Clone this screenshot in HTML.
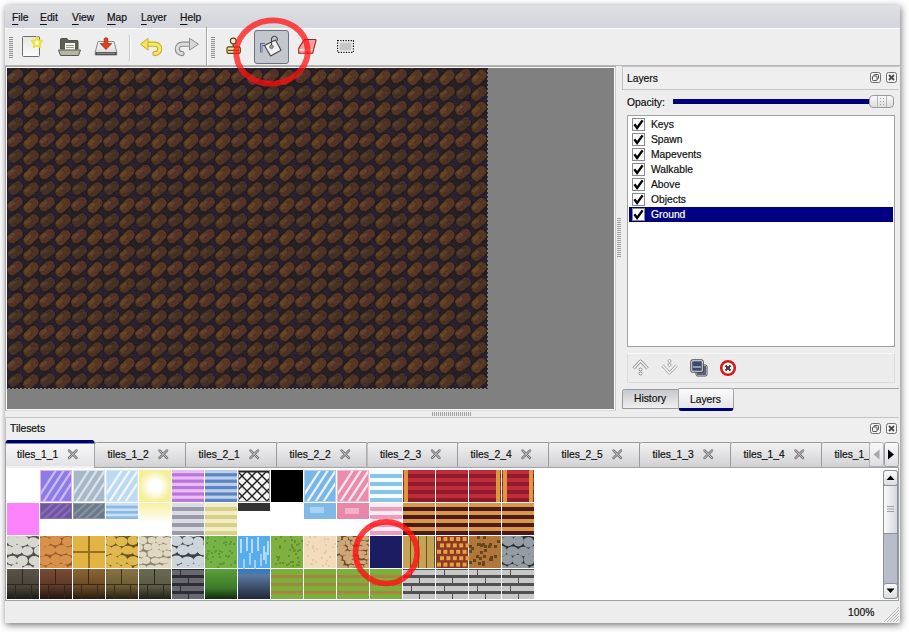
<!DOCTYPE html>
<html><head><meta charset="utf-8">
<style>
*{margin:0;padding:0;box-sizing:border-box}
html,body{width:909px;height:632px;overflow:hidden;background:#fff}
body{position:relative;font-family:"Liberation Sans",sans-serif;font-size:10px;color:#1a1a1a}
.a{position:absolute}
.t{position:absolute;font-size:10.3px;line-height:12px;white-space:nowrap;-webkit-text-stroke:0.2px currentColor;color:#111}
.u{text-decoration:underline;text-underline-offset:3px}
#win{left:5px;top:5px;width:895px;height:618px;background:#ededed;box-shadow:1px 2px 7px rgba(0,0,0,.55)}
#menubar{left:5px;top:5px;width:895px;height:23px;background:linear-gradient(#dfe0e4,#d4d5da)}
#toolbar{left:5px;top:28px;width:895px;height:38px;background:#eeeeee;border-top:1px solid #fafafa;border-bottom:1px solid #b6b6b6}
</style></head><body>
<div id="win" class="a"></div>
<div id="menubar" class="a"></div>
<div class="t" style="left:12px;top:12px"><span class="u">F</span>ile</div>
<div class="t" style="left:40px;top:12px"><span class="u">E</span>dit</div>
<div class="t" style="left:72px;top:12px"><span class="u">V</span>iew</div>
<div class="t" style="left:107px;top:12px"><span class="u">M</span>ap</div>
<div class="t" style="left:141px;top:12px"><span class="u">L</span>ayer</div>
<div class="t" style="left:180px;top:12px"><span class="u">H</span>elp</div>
<div id="toolbar" class="a"></div>
<svg class="a" style="left:0;top:0" width="909" height="70" viewBox="0 0 909 70">
<defs>
<linearGradient id="pg" x1="0" y1="0" x2="0" y2="1"><stop offset="0" stop-color="#e6e6e2"/><stop offset="1" stop-color="#fbfbfb"/></linearGradient>
<linearGradient id="trayg" x1="0" y1="0" x2="0" y2="1"><stop offset="0" stop-color="#f8f8f8"/><stop offset="1" stop-color="#d8d8d8"/></linearGradient>
</defs>
<!-- grips -->
<g fill="#8e8e8e"><rect x="9" y="37" width="4" height="1"/><rect x="9" y="39" width="4" height="1"/><rect x="9" y="41" width="4" height="1"/><rect x="9" y="43" width="4" height="1"/><rect x="9" y="45" width="4" height="1"/><rect x="9" y="47" width="4" height="1"/><rect x="9" y="49" width="4" height="1"/><rect x="9" y="51" width="4" height="1"/><rect x="9" y="53" width="4" height="1"/><rect x="9" y="55" width="4" height="1"/><rect x="9" y="57" width="4" height="1"/></g>
<g fill="#8e8e8e"><rect x="211" y="37" width="4" height="1"/><rect x="211" y="39" width="4" height="1"/><rect x="211" y="41" width="4" height="1"/><rect x="211" y="43" width="4" height="1"/><rect x="211" y="45" width="4" height="1"/><rect x="211" y="47" width="4" height="1"/><rect x="211" y="49" width="4" height="1"/><rect x="211" y="51" width="4" height="1"/><rect x="211" y="53" width="4" height="1"/><rect x="211" y="55" width="4" height="1"/><rect x="211" y="57" width="4" height="1"/></g>
<rect x="129" y="35" width="1" height="26" fill="#c9c9c9"/><rect x="130" y="35" width="1" height="26" fill="#fbfbfb"/>
<rect x="206" y="27" width="1" height="38" fill="#a9a9a9"/><rect x="207" y="28" width="1" height="37" fill="#fafafa"/>
<!-- new -->
<rect x="22.5" y="36.5" width="17" height="20" rx="1" fill="url(#pg)" stroke="#6c6c6c"/>
<polygon points="37.00,37.00 38.76,40.17 42.33,40.87 39.85,43.53 40.29,47.13 37.00,45.60 33.71,47.13 34.15,43.53 31.67,40.87 35.24,40.17" fill="#f6ee6a" stroke="#ece23a" stroke-width="2" stroke-linejoin="round" opacity=".95"/><circle cx="37" cy="42.8" r="1.9" fill="#fffef0"/>
<!-- open -->
<path d="M60.5 49 V39.5 Q60.5 38.5 61.5 38.5 H67 L68.5 40.5 H77 Q78 40.5 78 41.5 V49 Z" fill="#5e5e52" stroke="#505046"/>
<rect x="65" y="43" width="10" height="7" fill="#f4f4f0"/>
<rect x="66" y="45" width="8" height="1" fill="#9a9a90"/><rect x="66" y="47" width="8" height="1" fill="#9a9a90"/>
<path d="M58.5 50 H80.5 L78.5 55.5 H60.5 Z" fill="#b6b6a6" stroke="#56564c"/>
<!-- save -->
<path d="M98 41.5 H114 L116.8 52.5 V55 H95.2 V52.5 Z" fill="url(#trayg)" stroke="#8a8a8a"/>
<rect x="95.5" y="52" width="21" height="3" fill="#4c4c4c"/>
<rect x="97" y="52.8" width="18" height="1" fill="#9a9a9a"/>
<path d="M104.2 38.5 Q106 36.8 107.8 38.5 V43.5 H111.8 L106 49.5 L100.2 43.5 H104.2 Z" fill="#e2401c" stroke="#b02a10" stroke-width=".8"/>
<!-- undo -->
<path d="M147.5 44.2 H155 A4.7 4.7 0 0 1 155 53.6" fill="none" stroke="#c4ae2a" stroke-width="5.2" stroke-linecap="round"/>
<path d="M147.5 44.2 H155 A4.7 4.7 0 0 1 155 53.6" fill="none" stroke="#f6ea64" stroke-width="3" stroke-linecap="round"/>
<polygon points="140.5,44.2 148,38.3 148,50.1" fill="#f4e45a" stroke="#c4ae2a" stroke-width="1" stroke-linejoin="round"/>
<!-- redo -->
<path d="M190 44.2 H182 A4.7 4.7 0 0 0 182 53.6" fill="none" stroke="#8c8c8c" stroke-width="5.2" stroke-linecap="round"/>
<path d="M190 44.2 H182 A4.7 4.7 0 0 0 182 53.6" fill="none" stroke="#dcdcdc" stroke-width="3" stroke-linecap="round"/>
<polygon points="198.5,44.2 189.5,38.3 189.5,50.1" fill="#d8d8d8" stroke="#8c8c8c" stroke-width="1" stroke-linejoin="round"/>
<!-- stamp -->
<circle cx="233.3" cy="41" r="2.9" fill="#f4ead0" stroke="#5a4218" stroke-width="1.2"/>
<rect x="232.6" y="44" width="1.6" height="2.8" fill="#6a4a1a"/>
<rect x="227" y="46.9" width="13.3" height="6.5" rx="1.6" fill="#f0e2a4" stroke="#5a4218" stroke-width="1.2"/>
<rect x="228" y="49.8" width="11.3" height="1.3" fill="#6a5020"/>
<!-- bucket button -->
<rect x="254.5" y="30.5" width="34" height="33" rx="2.5" fill="#c2c6cd" stroke="#6c727e"/>
<path d="M261.2 52.5 V44.5 H265" fill="none" stroke="#46507c" stroke-width="2.4"/>
<path d="M261.2 52.5 V44.5 H265" fill="none" stroke="#b8c4ec" stroke-width="1"/>
<polygon points="264.5,45.5 275.5,40 281,50.3 270.6,56" fill="#f2f2f2" stroke="#454545" stroke-width="1.1" stroke-linejoin="round"/>
<path d="M271.5 46.5 V40 A3 3 0 1 1 277 40.8" fill="none" stroke="#454545" stroke-width="1.1"/>
<circle cx="271.5" cy="46.8" r="1.8" fill="#9a9a9a" stroke="#555" stroke-width=".8"/>
<!-- eraser -->
<path d="M304.3 39.5 H315.3 Q316.3 39.5 316 40.6 L312.6 53.3 H298.7 V48.4 Z" fill="#f3a0a0" stroke="#9c2424" stroke-width="1.1" stroke-linejoin="round"/>
<rect x="299.5" y="49" width="13" height="1.4" fill="#fde8e8"/>
<!-- rect select -->
<rect x="337" y="40" width="17" height="13" fill="#f8f8f8"/><rect x="339.5" y="42.5" width="12" height="8" fill="#c6c6c4"/><rect x="337.6" y="40.6" width="15.8" height="11.8" fill="none" stroke="#0a0a0a" stroke-width="1.2" stroke-dasharray="1.3 1.3"/>
</svg>


<!-- map view -->
<div class="a" style="left:5px;top:66px;width:611px;height:345px;border:1px solid #a8a8a8;border-right-color:#c8c8c8;border-bottom-color:#d8d8d8;background:#fafafa"></div>
<div class="a" style="left:7px;top:68px;width:607px;height:341px;background:#808080"></div>
<svg class="a" style="left:7px;top:68px" width="481" height="321" viewBox="0 0 481 321">
<defs><pattern id="mt" width="32" height="32" patternUnits="userSpaceOnUse">
<rect width="32" height="32" fill="#282026"/><g transform="translate(-32 -32)"><ellipse cx="16" cy="16" rx="4" ry="4" fill="#2a2230"/><ellipse cx="0" cy="0" rx="4" ry="4" fill="#2a2230"/><g transform="rotate(-38 8 8)"><rect x="-1.3" y="2.2" width="18.6" height="11.6" rx="5.0" fill="#241a1c"/><rect x="-0.5" y="3.0" width="17" height="10" rx="4.5" fill="#54342c"/><rect x="1.5" y="4.0" width="7.65" height="3.5" rx="1" fill="#64462e"/></g><g transform="rotate(-44 24 9.5)"><rect x="14.7" y="3.7" width="18.6" height="11.6" rx="5.0" fill="#241a1c"/><rect x="15.5" y="4.5" width="17" height="10" rx="4.5" fill="#5a3826"/><rect x="17.5" y="5.5" width="7.65" height="3.5" rx="1" fill="#6a4628"/></g><g transform="rotate(-36 8.5 24)"><rect x="-0.30000000000000004" y="18.2" width="17.6" height="11.6" rx="5.0" fill="#241a1c"/><rect x="0.5" y="19.0" width="16" height="10" rx="4.5" fill="#46302a"/><rect x="2.5" y="20.0" width="7.2" height="3.5" rx="1" fill="#54402c"/></g><g transform="rotate(-40 24 25.5)"><rect x="14.7" y="19.7" width="18.6" height="11.6" rx="5.0" fill="#241a1c"/><rect x="15.5" y="20.5" width="17" height="10" rx="4.5" fill="#4e3428"/><rect x="17.5" y="21.5" width="7.65" height="3.5" rx="1" fill="#5e4428"/></g></g><g transform="translate(-32 0)"><ellipse cx="16" cy="16" rx="4" ry="4" fill="#2a2230"/><ellipse cx="0" cy="0" rx="4" ry="4" fill="#2a2230"/><g transform="rotate(-38 8 8)"><rect x="-1.3" y="2.2" width="18.6" height="11.6" rx="5.0" fill="#241a1c"/><rect x="-0.5" y="3.0" width="17" height="10" rx="4.5" fill="#54342c"/><rect x="1.5" y="4.0" width="7.65" height="3.5" rx="1" fill="#64462e"/></g><g transform="rotate(-44 24 9.5)"><rect x="14.7" y="3.7" width="18.6" height="11.6" rx="5.0" fill="#241a1c"/><rect x="15.5" y="4.5" width="17" height="10" rx="4.5" fill="#5a3826"/><rect x="17.5" y="5.5" width="7.65" height="3.5" rx="1" fill="#6a4628"/></g><g transform="rotate(-36 8.5 24)"><rect x="-0.30000000000000004" y="18.2" width="17.6" height="11.6" rx="5.0" fill="#241a1c"/><rect x="0.5" y="19.0" width="16" height="10" rx="4.5" fill="#46302a"/><rect x="2.5" y="20.0" width="7.2" height="3.5" rx="1" fill="#54402c"/></g><g transform="rotate(-40 24 25.5)"><rect x="14.7" y="19.7" width="18.6" height="11.6" rx="5.0" fill="#241a1c"/><rect x="15.5" y="20.5" width="17" height="10" rx="4.5" fill="#4e3428"/><rect x="17.5" y="21.5" width="7.65" height="3.5" rx="1" fill="#5e4428"/></g></g><g transform="translate(-32 32)"><ellipse cx="16" cy="16" rx="4" ry="4" fill="#2a2230"/><ellipse cx="0" cy="0" rx="4" ry="4" fill="#2a2230"/><g transform="rotate(-38 8 8)"><rect x="-1.3" y="2.2" width="18.6" height="11.6" rx="5.0" fill="#241a1c"/><rect x="-0.5" y="3.0" width="17" height="10" rx="4.5" fill="#54342c"/><rect x="1.5" y="4.0" width="7.65" height="3.5" rx="1" fill="#64462e"/></g><g transform="rotate(-44 24 9.5)"><rect x="14.7" y="3.7" width="18.6" height="11.6" rx="5.0" fill="#241a1c"/><rect x="15.5" y="4.5" width="17" height="10" rx="4.5" fill="#5a3826"/><rect x="17.5" y="5.5" width="7.65" height="3.5" rx="1" fill="#6a4628"/></g><g transform="rotate(-36 8.5 24)"><rect x="-0.30000000000000004" y="18.2" width="17.6" height="11.6" rx="5.0" fill="#241a1c"/><rect x="0.5" y="19.0" width="16" height="10" rx="4.5" fill="#46302a"/><rect x="2.5" y="20.0" width="7.2" height="3.5" rx="1" fill="#54402c"/></g><g transform="rotate(-40 24 25.5)"><rect x="14.7" y="19.7" width="18.6" height="11.6" rx="5.0" fill="#241a1c"/><rect x="15.5" y="20.5" width="17" height="10" rx="4.5" fill="#4e3428"/><rect x="17.5" y="21.5" width="7.65" height="3.5" rx="1" fill="#5e4428"/></g></g><g transform="translate(0 -32)"><ellipse cx="16" cy="16" rx="4" ry="4" fill="#2a2230"/><ellipse cx="0" cy="0" rx="4" ry="4" fill="#2a2230"/><g transform="rotate(-38 8 8)"><rect x="-1.3" y="2.2" width="18.6" height="11.6" rx="5.0" fill="#241a1c"/><rect x="-0.5" y="3.0" width="17" height="10" rx="4.5" fill="#54342c"/><rect x="1.5" y="4.0" width="7.65" height="3.5" rx="1" fill="#64462e"/></g><g transform="rotate(-44 24 9.5)"><rect x="14.7" y="3.7" width="18.6" height="11.6" rx="5.0" fill="#241a1c"/><rect x="15.5" y="4.5" width="17" height="10" rx="4.5" fill="#5a3826"/><rect x="17.5" y="5.5" width="7.65" height="3.5" rx="1" fill="#6a4628"/></g><g transform="rotate(-36 8.5 24)"><rect x="-0.30000000000000004" y="18.2" width="17.6" height="11.6" rx="5.0" fill="#241a1c"/><rect x="0.5" y="19.0" width="16" height="10" rx="4.5" fill="#46302a"/><rect x="2.5" y="20.0" width="7.2" height="3.5" rx="1" fill="#54402c"/></g><g transform="rotate(-40 24 25.5)"><rect x="14.7" y="19.7" width="18.6" height="11.6" rx="5.0" fill="#241a1c"/><rect x="15.5" y="20.5" width="17" height="10" rx="4.5" fill="#4e3428"/><rect x="17.5" y="21.5" width="7.65" height="3.5" rx="1" fill="#5e4428"/></g></g><g transform="translate(0 0)"><ellipse cx="16" cy="16" rx="4" ry="4" fill="#2a2230"/><ellipse cx="0" cy="0" rx="4" ry="4" fill="#2a2230"/><g transform="rotate(-38 8 8)"><rect x="-1.3" y="2.2" width="18.6" height="11.6" rx="5.0" fill="#241a1c"/><rect x="-0.5" y="3.0" width="17" height="10" rx="4.5" fill="#54342c"/><rect x="1.5" y="4.0" width="7.65" height="3.5" rx="1" fill="#64462e"/></g><g transform="rotate(-44 24 9.5)"><rect x="14.7" y="3.7" width="18.6" height="11.6" rx="5.0" fill="#241a1c"/><rect x="15.5" y="4.5" width="17" height="10" rx="4.5" fill="#5a3826"/><rect x="17.5" y="5.5" width="7.65" height="3.5" rx="1" fill="#6a4628"/></g><g transform="rotate(-36 8.5 24)"><rect x="-0.30000000000000004" y="18.2" width="17.6" height="11.6" rx="5.0" fill="#241a1c"/><rect x="0.5" y="19.0" width="16" height="10" rx="4.5" fill="#46302a"/><rect x="2.5" y="20.0" width="7.2" height="3.5" rx="1" fill="#54402c"/></g><g transform="rotate(-40 24 25.5)"><rect x="14.7" y="19.7" width="18.6" height="11.6" rx="5.0" fill="#241a1c"/><rect x="15.5" y="20.5" width="17" height="10" rx="4.5" fill="#4e3428"/><rect x="17.5" y="21.5" width="7.65" height="3.5" rx="1" fill="#5e4428"/></g></g><g transform="translate(0 32)"><ellipse cx="16" cy="16" rx="4" ry="4" fill="#2a2230"/><ellipse cx="0" cy="0" rx="4" ry="4" fill="#2a2230"/><g transform="rotate(-38 8 8)"><rect x="-1.3" y="2.2" width="18.6" height="11.6" rx="5.0" fill="#241a1c"/><rect x="-0.5" y="3.0" width="17" height="10" rx="4.5" fill="#54342c"/><rect x="1.5" y="4.0" width="7.65" height="3.5" rx="1" fill="#64462e"/></g><g transform="rotate(-44 24 9.5)"><rect x="14.7" y="3.7" width="18.6" height="11.6" rx="5.0" fill="#241a1c"/><rect x="15.5" y="4.5" width="17" height="10" rx="4.5" fill="#5a3826"/><rect x="17.5" y="5.5" width="7.65" height="3.5" rx="1" fill="#6a4628"/></g><g transform="rotate(-36 8.5 24)"><rect x="-0.30000000000000004" y="18.2" width="17.6" height="11.6" rx="5.0" fill="#241a1c"/><rect x="0.5" y="19.0" width="16" height="10" rx="4.5" fill="#46302a"/><rect x="2.5" y="20.0" width="7.2" height="3.5" rx="1" fill="#54402c"/></g><g transform="rotate(-40 24 25.5)"><rect x="14.7" y="19.7" width="18.6" height="11.6" rx="5.0" fill="#241a1c"/><rect x="15.5" y="20.5" width="17" height="10" rx="4.5" fill="#4e3428"/><rect x="17.5" y="21.5" width="7.65" height="3.5" rx="1" fill="#5e4428"/></g></g><g transform="translate(32 -32)"><ellipse cx="16" cy="16" rx="4" ry="4" fill="#2a2230"/><ellipse cx="0" cy="0" rx="4" ry="4" fill="#2a2230"/><g transform="rotate(-38 8 8)"><rect x="-1.3" y="2.2" width="18.6" height="11.6" rx="5.0" fill="#241a1c"/><rect x="-0.5" y="3.0" width="17" height="10" rx="4.5" fill="#54342c"/><rect x="1.5" y="4.0" width="7.65" height="3.5" rx="1" fill="#64462e"/></g><g transform="rotate(-44 24 9.5)"><rect x="14.7" y="3.7" width="18.6" height="11.6" rx="5.0" fill="#241a1c"/><rect x="15.5" y="4.5" width="17" height="10" rx="4.5" fill="#5a3826"/><rect x="17.5" y="5.5" width="7.65" height="3.5" rx="1" fill="#6a4628"/></g><g transform="rotate(-36 8.5 24)"><rect x="-0.30000000000000004" y="18.2" width="17.6" height="11.6" rx="5.0" fill="#241a1c"/><rect x="0.5" y="19.0" width="16" height="10" rx="4.5" fill="#46302a"/><rect x="2.5" y="20.0" width="7.2" height="3.5" rx="1" fill="#54402c"/></g><g transform="rotate(-40 24 25.5)"><rect x="14.7" y="19.7" width="18.6" height="11.6" rx="5.0" fill="#241a1c"/><rect x="15.5" y="20.5" width="17" height="10" rx="4.5" fill="#4e3428"/><rect x="17.5" y="21.5" width="7.65" height="3.5" rx="1" fill="#5e4428"/></g></g><g transform="translate(32 0)"><ellipse cx="16" cy="16" rx="4" ry="4" fill="#2a2230"/><ellipse cx="0" cy="0" rx="4" ry="4" fill="#2a2230"/><g transform="rotate(-38 8 8)"><rect x="-1.3" y="2.2" width="18.6" height="11.6" rx="5.0" fill="#241a1c"/><rect x="-0.5" y="3.0" width="17" height="10" rx="4.5" fill="#54342c"/><rect x="1.5" y="4.0" width="7.65" height="3.5" rx="1" fill="#64462e"/></g><g transform="rotate(-44 24 9.5)"><rect x="14.7" y="3.7" width="18.6" height="11.6" rx="5.0" fill="#241a1c"/><rect x="15.5" y="4.5" width="17" height="10" rx="4.5" fill="#5a3826"/><rect x="17.5" y="5.5" width="7.65" height="3.5" rx="1" fill="#6a4628"/></g><g transform="rotate(-36 8.5 24)"><rect x="-0.30000000000000004" y="18.2" width="17.6" height="11.6" rx="5.0" fill="#241a1c"/><rect x="0.5" y="19.0" width="16" height="10" rx="4.5" fill="#46302a"/><rect x="2.5" y="20.0" width="7.2" height="3.5" rx="1" fill="#54402c"/></g><g transform="rotate(-40 24 25.5)"><rect x="14.7" y="19.7" width="18.6" height="11.6" rx="5.0" fill="#241a1c"/><rect x="15.5" y="20.5" width="17" height="10" rx="4.5" fill="#4e3428"/><rect x="17.5" y="21.5" width="7.65" height="3.5" rx="1" fill="#5e4428"/></g></g><g transform="translate(32 32)"><ellipse cx="16" cy="16" rx="4" ry="4" fill="#2a2230"/><ellipse cx="0" cy="0" rx="4" ry="4" fill="#2a2230"/><g transform="rotate(-38 8 8)"><rect x="-1.3" y="2.2" width="18.6" height="11.6" rx="5.0" fill="#241a1c"/><rect x="-0.5" y="3.0" width="17" height="10" rx="4.5" fill="#54342c"/><rect x="1.5" y="4.0" width="7.65" height="3.5" rx="1" fill="#64462e"/></g><g transform="rotate(-44 24 9.5)"><rect x="14.7" y="3.7" width="18.6" height="11.6" rx="5.0" fill="#241a1c"/><rect x="15.5" y="4.5" width="17" height="10" rx="4.5" fill="#5a3826"/><rect x="17.5" y="5.5" width="7.65" height="3.5" rx="1" fill="#6a4628"/></g><g transform="rotate(-36 8.5 24)"><rect x="-0.30000000000000004" y="18.2" width="17.6" height="11.6" rx="5.0" fill="#241a1c"/><rect x="0.5" y="19.0" width="16" height="10" rx="4.5" fill="#46302a"/><rect x="2.5" y="20.0" width="7.2" height="3.5" rx="1" fill="#54402c"/></g><g transform="rotate(-40 24 25.5)"><rect x="14.7" y="19.7" width="18.6" height="11.6" rx="5.0" fill="#241a1c"/><rect x="15.5" y="20.5" width="17" height="10" rx="4.5" fill="#4e3428"/><rect x="17.5" y="21.5" width="7.65" height="3.5" rx="1" fill="#5e4428"/></g></g>
</pattern>
<filter id="mb" x="0" y="0" width="1" height="1"><feGaussianBlur stdDeviation="0.7"/></filter></defs>
<rect x="0" y="0" width="480" height="320" fill="url(#mt)" filter="url(#mb)"/>
<filter id="nz" x="0" y="0" width="1" height="1"><feTurbulence type="fractalNoise" baseFrequency="0.45" numOctaves="2" seed="4"/><feColorMatrix values="0 0 0 0 0  0 0 0 0 0  0 0 0 0 0  0 0 0 -1.4 0.75"/></filter>
<rect x="0" y="0" width="480" height="320" filter="url(#nz)" opacity=".35"/>
<path d="M480.5 0 V320.5 H0" fill="none" stroke="#161010" stroke-width="1" stroke-dasharray="2 2" opacity=".75"/>
</svg>

<!-- layers dock -->
<div class="a" style="left:622px;top:66px;width:277px;height:24px;border:1px solid #c4c4c4;border-right:none;background:#efefef"></div>
<div class="t" style="left:627px;top:73px">Layers</div>
<div class="t" style="left:627px;top:97px">Opacity:</div>
<div class="a" style="left:673px;top:99px;width:200px;height:5px;background:#00007e"></div>
<div class="a" style="left:869px;top:95px;width:25px;height:13px;border:1px solid #9a9a9a;border-radius:4px;background:linear-gradient(#fafafa,#dcdcdc)"></div>
<div class="a" style="left:627px;top:115px;width:268px;height:232px;border:1px solid #a0a0a0;background:#fff"></div>
<div class="a" style="left:629px;top:207px;width:264px;height:15px;background:#000080"></div>
<div class="t" style="left:651px;top:119px">Keys</div>
<div class="t" style="left:651px;top:134px">Spawn</div>
<div class="t" style="left:651px;top:149px">Mapevents</div>
<div class="t" style="left:651px;top:164px">Walkable</div>
<div class="t" style="left:651px;top:179px">Above</div>
<div class="t" style="left:651px;top:194px">Objects</div>
<div class="t" style="left:651px;top:209px;color:#fff">Ground</div>

<div class="a" style="left:627px;top:353px;width:268px;height:30px;border:1px solid #dadada;border-top-color:#f8f8f8;background:#ececec"></div>

<!-- tilesets dock -->
<div class="a" style="left:5px;top:417px;width:894px;height:24px;border:1px solid #c4c4c4;border-right:none;border-bottom:none;background:#efefef"></div>
<div class="t" style="left:10px;top:423px">Tilesets</div>
<div class="a" style="left:5px;top:467px;width:894px;height:134px;border:1px solid #a0a0a0;background:#fff"></div>

<svg class="a" style="left:0;top:0" width="909" height="632" viewBox="0 0 909 632"><defs><clipPath id="tv"><rect x="6" y="468" width="877" height="131"/></clipPath></defs><g clip-path="url(#tv)"><rect x="40" y="470" width="32" height="32" fill="#8c7ce8" /><clipPath id="c40_470"><rect x="40" y="470" width="32" height="32"/></clipPath><g clip-path="url(#c40_470)" stroke="#d8c8ff" stroke-width="2.2" opacity=".85"><line x1="34" y1="504" x2="60" y2="464"/><line x1="42" y1="504" x2="68" y2="464"/><line x1="50" y1="504" x2="76" y2="464"/><line x1="58" y1="504" x2="84" y2="464"/></g><rect x="40.5" y="470.5" width="31" height="31" fill="none" stroke="#e8b0f0"/><rect x="73" y="470" width="32" height="32" fill="#a8b8c6" /><clipPath id="c73_470"><rect x="73" y="470" width="32" height="32"/></clipPath><g clip-path="url(#c73_470)" stroke="#e4ecf4" stroke-width="2.2" opacity=".85"><line x1="67" y1="504" x2="93" y2="464"/><line x1="75" y1="504" x2="101" y2="464"/><line x1="83" y1="504" x2="109" y2="464"/><line x1="91" y1="504" x2="117" y2="464"/></g><rect x="73.5" y="470.5" width="31" height="31" fill="none" stroke="#d8e4ec"/><rect x="106" y="470" width="32" height="32" fill="#bcdaf2" /><clipPath id="c106_470"><rect x="106" y="470" width="32" height="32"/></clipPath><g clip-path="url(#c106_470)" stroke="#ffffff" stroke-width="2.2" opacity=".85"><line x1="100" y1="504" x2="126" y2="464"/><line x1="108" y1="504" x2="134" y2="464"/><line x1="116" y1="504" x2="142" y2="464"/><line x1="124" y1="504" x2="150" y2="464"/></g><rect x="106.5" y="470.5" width="31" height="31" fill="none" stroke="#d0e8f8"/><radialGradient id="yg"><stop offset=".35" stop-color="#ffffff"/><stop offset="1" stop-color="#f6ee98"/></radialGradient><rect x="139" y="470" width="32" height="32" fill="url(#yg)" /><rect x="172" y="470" width="32" height="32" fill="#ecbcf2" /><rect x="172" y="473.2" width="32" height="3.2" fill="#b676da" /><rect x="172" y="479.6" width="32" height="3.2" fill="#b676da" /><rect x="172" y="486.0" width="32" height="3.2" fill="#b676da" /><rect x="172" y="492.4" width="32" height="3.2" fill="#b676da" /><rect x="172" y="498.8" width="32" height="3.2" fill="#b676da" /><rect x="205" y="470" width="32" height="32" fill="#bcd0ec" /><rect x="205" y="473.2" width="32" height="3.2" fill="#5c84c2" /><rect x="205" y="479.6" width="32" height="3.2" fill="#5c84c2" /><rect x="205" y="486.0" width="32" height="3.2" fill="#5c84c2" /><rect x="205" y="492.4" width="32" height="3.2" fill="#5c84c2" /><rect x="205" y="498.8" width="32" height="3.2" fill="#5c84c2" /><rect x="238" y="470" width="32" height="32" fill="#f4f4f4" /><clipPath id="lat"><rect x="238" y="470" width="32" height="32"/></clipPath><g clip-path="url(#lat)" stroke="#202020" stroke-width="1.3"><line x1="206" y1="470" x2="238" y2="502"/><line x1="206" y1="502" x2="238" y2="470"/><line x1="216" y1="470" x2="248" y2="502"/><line x1="216" y1="502" x2="248" y2="470"/><line x1="226" y1="470" x2="258" y2="502"/><line x1="226" y1="502" x2="258" y2="470"/><line x1="236" y1="470" x2="268" y2="502"/><line x1="236" y1="502" x2="268" y2="470"/><line x1="246" y1="470" x2="278" y2="502"/><line x1="246" y1="502" x2="278" y2="470"/><line x1="256" y1="470" x2="288" y2="502"/><line x1="256" y1="502" x2="288" y2="470"/><line x1="266" y1="470" x2="298" y2="502"/><line x1="266" y1="502" x2="298" y2="470"/><line x1="276" y1="470" x2="308" y2="502"/><line x1="276" y1="502" x2="308" y2="470"/></g><rect x="238.5" y="470.5" width="31" height="31" fill="none" stroke="#9a9a9a"/><rect x="239" y="471" width="30" height="1.5" fill="#222" /><rect x="271" y="470" width="32" height="32" fill="#000000" /><rect x="304" y="470" width="32" height="32" fill="#7ab6e6" /><clipPath id="c304_470"><rect x="304" y="470" width="32" height="32"/></clipPath><g clip-path="url(#c304_470)" stroke="#ffffff" stroke-width="2.2" opacity=".85"><line x1="298" y1="504" x2="324" y2="464"/><line x1="306" y1="504" x2="332" y2="464"/><line x1="314" y1="504" x2="340" y2="464"/><line x1="322" y1="504" x2="348" y2="464"/></g><rect x="304.5" y="470.5" width="31" height="31" fill="none" stroke="#a8d0f0"/><rect x="337" y="470" width="32" height="32" fill="#ec8cac" /><clipPath id="c337_470"><rect x="337" y="470" width="32" height="32"/></clipPath><g clip-path="url(#c337_470)" stroke="#ffffff" stroke-width="2.2" opacity=".85"><line x1="331" y1="504" x2="357" y2="464"/><line x1="339" y1="504" x2="365" y2="464"/><line x1="347" y1="504" x2="373" y2="464"/><line x1="355" y1="504" x2="381" y2="464"/></g><rect x="337.5" y="470.5" width="31" height="31" fill="none" stroke="#f0b8c8"/><rect x="370" y="470" width="32" height="32" fill="#f4fbff" /><rect x="370" y="474.0" width="32" height="4.0" fill="#88c4ea" /><rect x="370" y="482.0" width="32" height="4.0" fill="#88c4ea" /><rect x="370" y="490.0" width="32" height="4.0" fill="#88c4ea" /><rect x="370" y="498.0" width="32" height="4.0" fill="#88c4ea" /><rect x="403" y="470" width="32" height="32" fill="#c02c3c" /><rect x="403" y="474.0" width="32" height="4.0" fill="#8e1a2a" /><rect x="403" y="482.0" width="32" height="4.0" fill="#8e1a2a" /><rect x="403" y="490.0" width="32" height="4.0" fill="#8e1a2a" /><rect x="403" y="498.0" width="32" height="4.0" fill="#8e1a2a" /><rect x="404" y="470" width="4" height="32" fill="#d89a3a" /><rect x="436" y="470" width="32" height="32" fill="#c02c3c" /><rect x="436" y="474.0" width="32" height="4.0" fill="#8e1a2a" /><rect x="436" y="482.0" width="32" height="4.0" fill="#8e1a2a" /><rect x="436" y="490.0" width="32" height="4.0" fill="#8e1a2a" /><rect x="436" y="498.0" width="32" height="4.0" fill="#8e1a2a" /><rect x="469" y="470" width="32" height="32" fill="#c02c3c" /><rect x="469" y="474.0" width="32" height="4.0" fill="#8e1a2a" /><rect x="469" y="482.0" width="32" height="4.0" fill="#8e1a2a" /><rect x="469" y="490.0" width="32" height="4.0" fill="#8e1a2a" /><rect x="469" y="498.0" width="32" height="4.0" fill="#8e1a2a" /><rect x="496" y="470" width="4" height="32" fill="#d89a3a" /><rect x="502" y="470" width="32" height="32" fill="#c02c3c" /><rect x="502" y="474.0" width="32" height="4.0" fill="#8e1a2a" /><rect x="502" y="482.0" width="32" height="4.0" fill="#8e1a2a" /><rect x="502" y="490.0" width="32" height="4.0" fill="#8e1a2a" /><rect x="502" y="498.0" width="32" height="4.0" fill="#8e1a2a" /><rect x="503" y="470" width="4" height="32" fill="#d89a3a" /><rect x="529" y="470" width="4" height="32" fill="#d89a3a" /><rect x="7" y="503" width="32" height="32" fill="#fc82fc" /><rect x="40" y="503" width="32" height="16" fill="#6a5a9c" /><clipPath id="c40_503"><rect x="40" y="503" width="32" height="16"/></clipPath><g clip-path="url(#c40_503)" stroke="#9a68c8" stroke-width="2.2" opacity=".85"><line x1="34" y1="521" x2="60" y2="497"/><line x1="42" y1="521" x2="68" y2="497"/><line x1="50" y1="521" x2="76" y2="497"/><line x1="58" y1="521" x2="84" y2="497"/></g><rect x="40.5" y="503.5" width="31" height="15" fill="none" stroke="#8a70b0"/><rect x="73" y="503" width="32" height="16" fill="#6c7a88" /><clipPath id="c73_503"><rect x="73" y="503" width="32" height="16"/></clipPath><g clip-path="url(#c73_503)" stroke="#8a98a8" stroke-width="2.2" opacity=".85"><line x1="67" y1="521" x2="93" y2="497"/><line x1="75" y1="521" x2="101" y2="497"/><line x1="83" y1="521" x2="109" y2="497"/><line x1="91" y1="521" x2="117" y2="497"/></g><rect x="73.5" y="503.5" width="31" height="15" fill="none" stroke="#8898a8"/><rect x="106" y="503" width="32" height="16" fill="#c8e0f4" /><rect x="106" y="505.6666666666667" width="32" height="2.6666666666666665" fill="#8ab8e4" /><rect x="106" y="511.0" width="32" height="2.6666666666666665" fill="#8ab8e4" /><rect x="106" y="516.3333333333334" width="32" height="2.6666666666666665" fill="#8ab8e4" /><linearGradient id="yg2" x1="0" y1="0" x2="0" y2="1"><stop offset="0" stop-color="#f8f0a0"/><stop offset="1" stop-color="#ffffff"/></linearGradient><rect x="139" y="503" width="32" height="20" fill="url(#yg2)" /><rect x="172" y="503" width="32" height="32" fill="#dcdce4" /><rect x="172" y="507.0" width="32" height="4.0" fill="#9a9aaa" /><rect x="172" y="515.0" width="32" height="4.0" fill="#9a9aaa" /><rect x="172" y="523.0" width="32" height="4.0" fill="#9a9aaa" /><rect x="172" y="531.0" width="32" height="4.0" fill="#9a9aaa" /><rect x="205" y="503" width="32" height="32" fill="#f2eec4" /><rect x="205" y="507.0" width="32" height="4.0" fill="#d8d08a" /><rect x="205" y="515.0" width="32" height="4.0" fill="#d8d08a" /><rect x="205" y="523.0" width="32" height="4.0" fill="#d8d08a" /><rect x="205" y="531.0" width="32" height="4.0" fill="#d8d08a" /><rect x="238" y="503" width="32" height="8" fill="#333333" /><rect x="304" y="503" width="32" height="16" fill="#80b8e6" /><rect x="310" y="507" width="14" height="6" fill="#a8d4f4" /><rect x="337" y="503" width="32" height="16" fill="#e888a8" /><rect x="345" y="508" width="14" height="6" fill="#f4b0c8" /><rect x="370" y="503" width="32" height="32" fill="#fcecf4" /><rect x="370" y="507.0" width="32" height="4.0" fill="#ec9cbc" /><rect x="370" y="515.0" width="32" height="4.0" fill="#ec9cbc" /><rect x="370" y="523.0" width="32" height="4.0" fill="#ec9cbc" /><rect x="370" y="531.0" width="32" height="4.0" fill="#ec9cbc" /><rect x="403" y="503" width="32" height="32" fill="#d89848" /><rect x="403" y="507.0" width="32" height="4.0" fill="#4c1a1c" /><rect x="403" y="515.0" width="32" height="4.0" fill="#4c1a1c" /><rect x="403" y="523.0" width="32" height="4.0" fill="#4c1a1c" /><rect x="403" y="531.0" width="32" height="4.0" fill="#4c1a1c" /><rect x="436" y="503" width="32" height="32" fill="#d89848" /><rect x="436" y="507.0" width="32" height="4.0" fill="#4c1a1c" /><rect x="436" y="515.0" width="32" height="4.0" fill="#4c1a1c" /><rect x="436" y="523.0" width="32" height="4.0" fill="#4c1a1c" /><rect x="436" y="531.0" width="32" height="4.0" fill="#4c1a1c" /><rect x="469" y="503" width="32" height="32" fill="#d89848" /><rect x="469" y="507.0" width="32" height="4.0" fill="#4c1a1c" /><rect x="469" y="515.0" width="32" height="4.0" fill="#4c1a1c" /><rect x="469" y="523.0" width="32" height="4.0" fill="#4c1a1c" /><rect x="469" y="531.0" width="32" height="4.0" fill="#4c1a1c" /><rect x="502" y="503" width="32" height="32" fill="#d89848" /><rect x="502" y="507.0" width="32" height="4.0" fill="#4c1a1c" /><rect x="502" y="515.0" width="32" height="4.0" fill="#4c1a1c" /><rect x="502" y="523.0" width="32" height="4.0" fill="#4c1a1c" /><rect x="502" y="531.0" width="32" height="4.0" fill="#4c1a1c" /><rect x="7" y="536" width="32" height="32" fill="#505050" /><clipPath id="b7_536"><rect x="7" y="536" width="32" height="32"/></clipPath><g clip-path="url(#b7_536)"><ellipse cx="7.2" cy="532.5" rx="6.3" ry="5.4" fill="#d8d8d0"/><ellipse cx="18.1" cy="532.9" rx="5.4" ry="4.9" fill="#d8d8d0"/><ellipse cx="29.2" cy="532.4" rx="6.5" ry="4.4" fill="#d8d8d0"/><ellipse cx="38.9" cy="531.5" rx="6.0" ry="5.0" fill="#d8d8d0"/><ellipse cx="48.7" cy="531.5" rx="5.7" ry="5.4" fill="#d8d8d0"/><ellipse cx="2.2" cy="540.7" rx="6.3" ry="4.5" fill="#d8d8d0"/><ellipse cx="12.6" cy="540.6" rx="5.4" ry="5.4" fill="#d8d8d0"/><ellipse cx="22.4" cy="540.8" rx="6.6" ry="5.4" fill="#d8d8d0"/><ellipse cx="33.2" cy="542.3" rx="6.0" ry="5.1" fill="#d8d8d0"/><ellipse cx="43.7" cy="542.2" rx="6.2" ry="5.5" fill="#d8d8d0"/><ellipse cx="7.8" cy="550.2" rx="5.8" ry="4.5" fill="#d8d8d0"/><ellipse cx="17.0" cy="549.7" rx="5.7" ry="5.0" fill="#d8d8d0"/><ellipse cx="27.3" cy="551.0" rx="5.8" ry="4.7" fill="#d8d8d0"/><ellipse cx="39.6" cy="550.6" rx="5.8" ry="4.9" fill="#d8d8d0"/><ellipse cx="50.1" cy="549.7" rx="6.5" ry="4.3" fill="#d8d8d0"/><ellipse cx="2.2" cy="560.6" rx="5.4" ry="5.3" fill="#d8d8d0"/><ellipse cx="12.1" cy="560.1" rx="5.4" ry="4.4" fill="#d8d8d0"/><ellipse cx="22.4" cy="560.8" rx="5.6" ry="5.2" fill="#d8d8d0"/><ellipse cx="34.5" cy="560.8" rx="5.8" ry="4.7" fill="#d8d8d0"/><ellipse cx="44.4" cy="560.4" rx="5.5" ry="5.2" fill="#d8d8d0"/><ellipse cx="7.6" cy="569.9" rx="5.4" ry="5.4" fill="#d8d8d0"/><ellipse cx="16.8" cy="568.9" rx="6.1" ry="5.4" fill="#d8d8d0"/><ellipse cx="28.0" cy="570.0" rx="6.0" ry="4.7" fill="#d8d8d0"/><ellipse cx="38.6" cy="568.5" rx="5.5" ry="4.5" fill="#d8d8d0"/><ellipse cx="50.0" cy="570.2" rx="5.6" ry="4.4" fill="#d8d8d0"/></g><rect x="40" y="536" width="32" height="32" fill="#9a5a2a" /><clipPath id="b40_536"><rect x="40" y="536" width="32" height="32"/></clipPath><g clip-path="url(#b40_536)"><ellipse cx="40.6" cy="532.7" rx="6.0" ry="4.6" fill="#d8924c"/><ellipse cx="49.7" cy="532.4" rx="5.9" ry="5.2" fill="#d8924c"/><ellipse cx="61.1" cy="532.6" rx="5.7" ry="5.3" fill="#d8924c"/><ellipse cx="72.5" cy="531.9" rx="6.0" ry="5.1" fill="#d8924c"/><ellipse cx="82.1" cy="532.2" rx="6.3" ry="4.6" fill="#d8924c"/><ellipse cx="35.3" cy="541.7" rx="6.4" ry="4.7" fill="#d8924c"/><ellipse cx="44.5" cy="541.9" rx="6.3" ry="4.8" fill="#d8924c"/><ellipse cx="55.2" cy="540.7" rx="6.1" ry="4.7" fill="#d8924c"/><ellipse cx="67.6" cy="541.5" rx="5.6" ry="5.1" fill="#d8924c"/><ellipse cx="77.1" cy="542.2" rx="6.5" ry="4.9" fill="#d8924c"/><ellipse cx="40.3" cy="551.0" rx="6.3" ry="5.5" fill="#d8924c"/><ellipse cx="49.7" cy="550.3" rx="6.1" ry="4.7" fill="#d8924c"/><ellipse cx="61.5" cy="549.8" rx="6.4" ry="4.9" fill="#d8924c"/><ellipse cx="71.2" cy="550.9" rx="5.7" ry="4.5" fill="#d8924c"/><ellipse cx="82.6" cy="549.9" rx="5.6" ry="5.3" fill="#d8924c"/><ellipse cx="35.1" cy="558.9" rx="6.3" ry="4.3" fill="#d8924c"/><ellipse cx="45.0" cy="560.7" rx="6.1" ry="4.7" fill="#d8924c"/><ellipse cx="55.8" cy="559.7" rx="5.5" ry="5.5" fill="#d8924c"/><ellipse cx="65.8" cy="559.7" rx="6.3" ry="4.8" fill="#d8924c"/><ellipse cx="78.3" cy="559.4" rx="6.5" ry="5.4" fill="#d8924c"/><ellipse cx="40.3" cy="570.0" rx="5.9" ry="5.3" fill="#d8924c"/><ellipse cx="51.3" cy="569.2" rx="5.9" ry="5.2" fill="#d8924c"/><ellipse cx="61.2" cy="568.3" rx="6.3" ry="4.6" fill="#d8924c"/><ellipse cx="72.0" cy="569.7" rx="5.6" ry="4.3" fill="#d8924c"/><ellipse cx="81.9" cy="569.4" rx="5.8" ry="4.6" fill="#d8924c"/></g><rect x="73" y="536" width="32" height="32" fill="#e2b444" /><rect x="88" y="536" width="2" height="32" fill="#9a7020" /><rect x="73" y="551" width="32" height="2" fill="#9a7020" /><rect x="106" y="536" width="32" height="32" fill="#6a5020" /><clipPath id="b106_536"><rect x="106" y="536" width="32" height="32"/></clipPath><g clip-path="url(#b106_536)"><ellipse cx="105.6" cy="531.4" rx="6.2" ry="4.4" fill="#e0b850"/><ellipse cx="116.7" cy="531.8" rx="5.4" ry="4.9" fill="#e0b850"/><ellipse cx="126.4" cy="531.9" rx="5.5" ry="4.4" fill="#e0b850"/><ellipse cx="137.8" cy="532.7" rx="5.5" ry="4.6" fill="#e0b850"/><ellipse cx="148.9" cy="532.9" rx="6.1" ry="4.8" fill="#e0b850"/><ellipse cx="101.6" cy="540.4" rx="6.4" ry="4.7" fill="#e0b850"/><ellipse cx="110.6" cy="540.6" rx="5.7" ry="5.3" fill="#e0b850"/><ellipse cx="121.4" cy="541.5" rx="6.1" ry="4.8" fill="#e0b850"/><ellipse cx="132.8" cy="540.5" rx="5.4" ry="4.6" fill="#e0b850"/><ellipse cx="143.7" cy="541.2" rx="5.8" ry="5.0" fill="#e0b850"/><ellipse cx="105.9" cy="550.2" rx="6.3" ry="5.1" fill="#e0b850"/><ellipse cx="116.2" cy="550.8" rx="6.0" ry="5.4" fill="#e0b850"/><ellipse cx="127.8" cy="550.2" rx="6.5" ry="4.4" fill="#e0b850"/><ellipse cx="137.8" cy="551.1" rx="5.6" ry="4.9" fill="#e0b850"/><ellipse cx="147.7" cy="550.9" rx="6.3" ry="5.0" fill="#e0b850"/><ellipse cx="101.4" cy="559.5" rx="6.2" ry="5.0" fill="#e0b850"/><ellipse cx="111.5" cy="559.8" rx="6.4" ry="5.4" fill="#e0b850"/><ellipse cx="121.9" cy="560.2" rx="5.4" ry="5.1" fill="#e0b850"/><ellipse cx="133.0" cy="560.9" rx="6.4" ry="4.6" fill="#e0b850"/><ellipse cx="143.1" cy="560.2" rx="5.4" ry="4.9" fill="#e0b850"/><ellipse cx="105.3" cy="568.4" rx="5.4" ry="5.2" fill="#e0b850"/><ellipse cx="115.9" cy="568.7" rx="5.8" ry="5.4" fill="#e0b850"/><ellipse cx="126.5" cy="569.1" rx="6.0" ry="5.4" fill="#e0b850"/><ellipse cx="138.6" cy="569.9" rx="5.7" ry="4.8" fill="#e0b850"/><ellipse cx="148.4" cy="569.9" rx="6.5" ry="4.5" fill="#e0b850"/></g><rect x="139" y="536" width="32" height="32" fill="#8e826a" /><clipPath id="b139_536"><rect x="139" y="536" width="32" height="32"/></clipPath><g clip-path="url(#b139_536)"><ellipse cx="138.5" cy="534.0" rx="4.0" ry="3.9" fill="#e0d8c2"/><ellipse cx="146.2" cy="532.5" rx="5.1" ry="3.3" fill="#e0d8c2"/><ellipse cx="155.3" cy="533.0" rx="4.4" ry="3.7" fill="#e0d8c2"/><ellipse cx="162.4" cy="533.7" rx="4.0" ry="3.4" fill="#e0d8c2"/><ellipse cx="170.0" cy="532.6" rx="4.4" ry="4.2" fill="#e0d8c2"/><ellipse cx="178.8" cy="532.3" rx="4.2" ry="4.3" fill="#e0d8c2"/><ellipse cx="134.1" cy="540.2" rx="4.3" ry="3.9" fill="#e0d8c2"/><ellipse cx="142.7" cy="540.4" rx="4.5" ry="3.9" fill="#e0d8c2"/><ellipse cx="151.8" cy="540.2" rx="4.1" ry="3.2" fill="#e0d8c2"/><ellipse cx="159.9" cy="540.0" rx="4.1" ry="4.2" fill="#e0d8c2"/><ellipse cx="167.2" cy="540.5" rx="4.9" ry="3.4" fill="#e0d8c2"/><ellipse cx="174.7" cy="540.8" rx="4.0" ry="4.0" fill="#e0d8c2"/><ellipse cx="138.2" cy="547.3" rx="4.7" ry="4.2" fill="#e0d8c2"/><ellipse cx="147.7" cy="547.0" rx="4.1" ry="3.3" fill="#e0d8c2"/><ellipse cx="155.1" cy="547.0" rx="4.0" ry="4.2" fill="#e0d8c2"/><ellipse cx="163.0" cy="547.4" rx="4.1" ry="3.4" fill="#e0d8c2"/><ellipse cx="170.0" cy="546.6" rx="4.2" ry="3.6" fill="#e0d8c2"/><ellipse cx="178.8" cy="547.6" rx="4.9" ry="3.3" fill="#e0d8c2"/><ellipse cx="134.8" cy="553.3" rx="4.7" ry="4.2" fill="#e0d8c2"/><ellipse cx="142.4" cy="554.5" rx="4.2" ry="3.1" fill="#e0d8c2"/><ellipse cx="151.5" cy="553.6" rx="4.1" ry="3.6" fill="#e0d8c2"/><ellipse cx="158.5" cy="553.7" rx="4.4" ry="3.6" fill="#e0d8c2"/><ellipse cx="167.2" cy="553.5" rx="4.0" ry="3.2" fill="#e0d8c2"/><ellipse cx="174.2" cy="554.0" rx="4.3" ry="4.0" fill="#e0d8c2"/><ellipse cx="139.0" cy="561.3" rx="5.1" ry="3.2" fill="#e0d8c2"/><ellipse cx="146.0" cy="560.2" rx="4.3" ry="3.8" fill="#e0d8c2"/><ellipse cx="155.5" cy="560.6" rx="5.0" ry="3.1" fill="#e0d8c2"/><ellipse cx="163.7" cy="560.3" rx="4.9" ry="3.1" fill="#e0d8c2"/><ellipse cx="171.9" cy="561.4" rx="5.1" ry="3.8" fill="#e0d8c2"/><ellipse cx="178.4" cy="561.8" rx="4.4" ry="3.2" fill="#e0d8c2"/><ellipse cx="135.2" cy="567.8" rx="4.4" ry="3.3" fill="#e0d8c2"/><ellipse cx="142.2" cy="568.0" rx="4.4" ry="3.2" fill="#e0d8c2"/><ellipse cx="150.9" cy="568.3" rx="4.7" ry="3.6" fill="#e0d8c2"/><ellipse cx="158.8" cy="567.6" rx="4.2" ry="3.3" fill="#e0d8c2"/><ellipse cx="166.9" cy="567.1" rx="4.8" ry="3.9" fill="#e0d8c2"/><ellipse cx="175.2" cy="566.9" rx="4.3" ry="3.6" fill="#e0d8c2"/></g><rect x="172" y="536" width="32" height="32" fill="#3c4048" /><clipPath id="b172_536"><rect x="172" y="536" width="32" height="32"/></clipPath><g clip-path="url(#b172_536)"><ellipse cx="171.9" cy="531.8" rx="5.5" ry="5.3" fill="#ccd4dc"/><ellipse cx="181.7" cy="532.1" rx="6.5" ry="4.4" fill="#ccd4dc"/><ellipse cx="193.4" cy="532.3" rx="5.4" ry="4.8" fill="#ccd4dc"/><ellipse cx="204.4" cy="532.0" rx="6.2" ry="4.5" fill="#ccd4dc"/><ellipse cx="214.1" cy="531.3" rx="6.0" ry="5.4" fill="#ccd4dc"/><ellipse cx="166.8" cy="541.9" rx="5.8" ry="5.2" fill="#ccd4dc"/><ellipse cx="176.5" cy="540.9" rx="6.2" ry="5.2" fill="#ccd4dc"/><ellipse cx="187.8" cy="540.5" rx="5.7" ry="4.6" fill="#ccd4dc"/><ellipse cx="198.2" cy="542.0" rx="5.6" ry="5.4" fill="#ccd4dc"/><ellipse cx="210.1" cy="540.4" rx="5.8" ry="4.9" fill="#ccd4dc"/><ellipse cx="171.0" cy="550.5" rx="6.5" ry="4.4" fill="#ccd4dc"/><ellipse cx="182.9" cy="549.9" rx="6.1" ry="5.4" fill="#ccd4dc"/><ellipse cx="192.7" cy="549.6" rx="5.5" ry="5.0" fill="#ccd4dc"/><ellipse cx="203.0" cy="549.8" rx="6.0" ry="5.4" fill="#ccd4dc"/><ellipse cx="214.5" cy="550.4" rx="6.1" ry="4.4" fill="#ccd4dc"/><ellipse cx="166.8" cy="559.2" rx="6.1" ry="5.5" fill="#ccd4dc"/><ellipse cx="176.4" cy="560.0" rx="6.1" ry="4.5" fill="#ccd4dc"/><ellipse cx="187.5" cy="560.9" rx="6.6" ry="4.5" fill="#ccd4dc"/><ellipse cx="199.1" cy="560.8" rx="5.7" ry="5.0" fill="#ccd4dc"/><ellipse cx="208.4" cy="559.6" rx="6.2" ry="5.0" fill="#ccd4dc"/><ellipse cx="172.5" cy="568.3" rx="5.8" ry="5.3" fill="#ccd4dc"/><ellipse cx="182.8" cy="569.1" rx="5.9" ry="5.5" fill="#ccd4dc"/><ellipse cx="193.5" cy="568.2" rx="6.3" ry="4.7" fill="#ccd4dc"/><ellipse cx="203.9" cy="568.6" rx="5.9" ry="4.7" fill="#ccd4dc"/><ellipse cx="213.8" cy="569.4" rx="5.5" ry="5.2" fill="#ccd4dc"/></g><rect x="205" y="536" width="32" height="32" fill="#74b444" /><rect x="219" y="563" width="2" height="2" fill="#5e9a34" /><rect x="222" y="563" width="2" height="2" fill="#5e9a34" /><rect x="234" y="560" width="2" height="2" fill="#5e9a34" /><rect x="219" y="550" width="2" height="2" fill="#5e9a34" /><rect x="221" y="563" width="2" height="2" fill="#5e9a34" /><rect x="223" y="542" width="2" height="2" fill="#5e9a34" /><rect x="210" y="561" width="2" height="2" fill="#5e9a34" /><rect x="221" y="551" width="2" height="2" fill="#5e9a34" /><rect x="225" y="555" width="2" height="2" fill="#5e9a34" /><rect x="230" y="541" width="2" height="2" fill="#5e9a34" /><rect x="208" y="550" width="2" height="2" fill="#5e9a34" /><rect x="214" y="540" width="2" height="2" fill="#5e9a34" /><rect x="207" y="553" width="2" height="2" fill="#5e9a34" /><rect x="230" y="564" width="2" height="2" fill="#5e9a34" /><rect x="227" y="556" width="2" height="2" fill="#5e9a34" /><rect x="206" y="555" width="2" height="2" fill="#5e9a34" /><rect x="217" y="566" width="2" height="2" fill="#5e9a34" /><rect x="219" y="556" width="2" height="2" fill="#5e9a34" /><rect x="228" y="555" width="2" height="2" fill="#5e9a34" /><rect x="225" y="541" width="2" height="2" fill="#5e9a34" /><rect x="224" y="536" width="2" height="2" fill="#5e9a34" /><rect x="231" y="552" width="2" height="2" fill="#5e9a34" /><rect x="207" y="537" width="2" height="2" fill="#5e9a34" /><rect x="206" y="542" width="2" height="2" fill="#5e9a34" /><rect x="233" y="543" width="2" height="2" fill="#5e9a34" /><rect x="224" y="536" width="2" height="2" fill="#5e9a34" /><rect x="229" y="550" width="2" height="2" fill="#5e9a34" /><rect x="215" y="550" width="2" height="2" fill="#5e9a34" /><rect x="223" y="562" width="2" height="2" fill="#5e9a34" /><rect x="211" y="552" width="2" height="2" fill="#5e9a34" /><rect x="212" y="556" width="2" height="2" fill="#5e9a34" /><rect x="214" y="551" width="2" height="2" fill="#5e9a34" /><rect x="205" y="557" width="2" height="2" fill="#5e9a34" /><rect x="207" y="550" width="2" height="2" fill="#5e9a34" /><rect x="225" y="544" width="2" height="2" fill="#5e9a34" /><rect x="218" y="553" width="2" height="2" fill="#5e9a34" /><rect x="234" y="562" width="2" height="2" fill="#5e9a34" /><rect x="207" y="558" width="2" height="2" fill="#5e9a34" /><rect x="213" y="546" width="2" height="2" fill="#5e9a34" /><rect x="229" y="543" width="2" height="2" fill="#5e9a34" /><rect x="238" y="536" width="32" height="32" fill="#58acee" /><rect x="240" y="539" width="2" height="14" fill="#b4def8" /><rect x="246" y="537" width="2" height="14" fill="#b4def8" /><rect x="251" y="539" width="2" height="14" fill="#b4def8" /><rect x="257" y="537" width="2" height="14" fill="#b4def8" /><rect x="263" y="546" width="2" height="14" fill="#b4def8" /><rect x="267" y="541" width="2" height="14" fill="#b4def8" /><rect x="243" y="559" width="2" height="12" fill="#a0d4f6" /><rect x="249" y="553" width="2" height="12" fill="#a0d4f6" /><rect x="254" y="560" width="2" height="12" fill="#a0d4f6" /><rect x="260" y="554" width="2" height="12" fill="#a0d4f6" /><rect x="265" y="552" width="2" height="12" fill="#a0d4f6" /><rect x="271" y="536" width="32" height="32" fill="#80b040" /><rect x="279" y="545" width="2" height="2" fill="#649030" /><rect x="292" y="565" width="2" height="2" fill="#649030" /><rect x="292" y="561" width="2" height="2" fill="#649030" /><rect x="298" y="564" width="2" height="2" fill="#649030" /><rect x="276" y="556" width="2" height="2" fill="#649030" /><rect x="278" y="557" width="2" height="2" fill="#649030" /><rect x="275" y="563" width="2" height="2" fill="#649030" /><rect x="278" y="556" width="2" height="2" fill="#649030" /><rect x="294" y="541" width="2" height="2" fill="#649030" /><rect x="275" y="538" width="2" height="2" fill="#649030" /><rect x="288" y="563" width="2" height="2" fill="#649030" /><rect x="277" y="559" width="2" height="2" fill="#649030" /><rect x="280" y="536" width="2" height="2" fill="#649030" /><rect x="284" y="540" width="2" height="2" fill="#649030" /><rect x="297" y="557" width="2" height="2" fill="#649030" /><rect x="290" y="536" width="2" height="2" fill="#649030" /><rect x="279" y="562" width="2" height="2" fill="#649030" /><rect x="275" y="538" width="2" height="2" fill="#649030" /><rect x="298" y="561" width="2" height="2" fill="#649030" /><rect x="296" y="564" width="2" height="2" fill="#649030" /><rect x="296" y="544" width="2" height="2" fill="#649030" /><rect x="297" y="550" width="2" height="2" fill="#649030" /><rect x="294" y="549" width="2" height="2" fill="#649030" /><rect x="301" y="540" width="2" height="2" fill="#649030" /><rect x="296" y="564" width="2" height="2" fill="#649030" /><rect x="279" y="547" width="2" height="2" fill="#649030" /><rect x="298" y="543" width="2" height="2" fill="#649030" /><rect x="286" y="564" width="2" height="2" fill="#649030" /><rect x="295" y="553" width="2" height="2" fill="#649030" /><rect x="289" y="549" width="2" height="2" fill="#649030" /><rect x="292" y="547" width="2" height="2" fill="#649030" /><rect x="299" y="549" width="2" height="2" fill="#649030" /><rect x="291" y="546" width="2" height="2" fill="#649030" /><rect x="291" y="539" width="2" height="2" fill="#649030" /><rect x="282" y="562" width="2" height="2" fill="#649030" /><rect x="290" y="561" width="2" height="2" fill="#649030" /><rect x="291" y="544" width="2" height="2" fill="#649030" /><rect x="293" y="550" width="2" height="2" fill="#649030" /><rect x="288" y="555" width="2" height="2" fill="#649030" /><rect x="294" y="540" width="2" height="2" fill="#649030" /><rect x="304" y="536" width="32" height="32" fill="#f2dcbc" /><rect x="307" y="555" width="2" height="2" fill="#e6c8a4" /><rect x="326" y="560" width="2" height="2" fill="#e6c8a4" /><rect x="324" y="552" width="2" height="2" fill="#e6c8a4" /><rect x="334" y="543" width="2" height="2" fill="#e6c8a4" /><rect x="312" y="559" width="2" height="2" fill="#e6c8a4" /><rect x="312" y="545" width="2" height="2" fill="#e6c8a4" /><rect x="327" y="538" width="2" height="2" fill="#e6c8a4" /><rect x="325" y="550" width="2" height="2" fill="#e6c8a4" /><rect x="313" y="550" width="2" height="2" fill="#e6c8a4" /><rect x="325" y="563" width="2" height="2" fill="#e6c8a4" /><rect x="316" y="548" width="2" height="2" fill="#e6c8a4" /><rect x="328" y="565" width="2" height="2" fill="#e6c8a4" /><rect x="307" y="544" width="2" height="2" fill="#e6c8a4" /><rect x="311" y="563" width="2" height="2" fill="#e6c8a4" /><rect x="332" y="546" width="2" height="2" fill="#e6c8a4" /><rect x="315" y="561" width="2" height="2" fill="#e6c8a4" /><rect x="312" y="547" width="2" height="2" fill="#e6c8a4" /><rect x="329" y="556" width="2" height="2" fill="#e6c8a4" /><rect x="324" y="552" width="2" height="2" fill="#e6c8a4" /><rect x="308" y="541" width="2" height="2" fill="#e6c8a4" /><rect x="321" y="557" width="2" height="2" fill="#e6c8a4" /><rect x="325" y="544" width="2" height="2" fill="#e6c8a4" /><rect x="309" y="536" width="2" height="2" fill="#e6c8a4" /><rect x="324" y="538" width="2" height="2" fill="#e6c8a4" /><rect x="307" y="555" width="2" height="2" fill="#e6c8a4" /><rect x="314" y="536" width="2" height="2" fill="#e6c8a4" /><rect x="306" y="544" width="2" height="2" fill="#e6c8a4" /><rect x="310" y="563" width="2" height="2" fill="#e6c8a4" /><rect x="316" y="548" width="2" height="2" fill="#e6c8a4" /><rect x="322" y="565" width="2" height="2" fill="#e6c8a4" /><rect x="337" y="536" width="32" height="32" fill="#6a4a2a" /><clipPath id="b337_536"><rect x="337" y="536" width="32" height="32"/></clipPath><g clip-path="url(#b337_536)"><ellipse cx="337.9" cy="533.0" rx="3.3" ry="2.0" fill="#d0a878"/><ellipse cx="343.3" cy="533.1" rx="3.4" ry="2.7" fill="#d0a878"/><ellipse cx="348.4" cy="535.0" rx="2.7" ry="2.3" fill="#d0a878"/><ellipse cx="353.4" cy="533.6" rx="2.7" ry="2.1" fill="#d0a878"/><ellipse cx="359.0" cy="534.8" rx="3.3" ry="2.1" fill="#d0a878"/><ellipse cx="364.5" cy="534.0" rx="2.7" ry="2.4" fill="#d0a878"/><ellipse cx="368.8" cy="533.2" rx="3.1" ry="2.3" fill="#d0a878"/><ellipse cx="374.5" cy="534.9" rx="3.2" ry="2.3" fill="#d0a878"/><ellipse cx="335.1" cy="539.7" rx="3.0" ry="3.0" fill="#d0a878"/><ellipse cx="338.7" cy="537.9" rx="2.6" ry="3.0" fill="#d0a878"/><ellipse cx="345.4" cy="539.1" rx="2.7" ry="2.4" fill="#d0a878"/><ellipse cx="351.1" cy="537.9" rx="2.5" ry="1.9" fill="#d0a878"/><ellipse cx="355.6" cy="539.3" rx="3.1" ry="2.3" fill="#d0a878"/><ellipse cx="361.0" cy="538.0" rx="3.5" ry="2.3" fill="#d0a878"/><ellipse cx="365.8" cy="538.3" rx="3.4" ry="2.2" fill="#d0a878"/><ellipse cx="372.5" cy="538.3" rx="2.9" ry="1.9" fill="#d0a878"/><ellipse cx="337.8" cy="543.9" rx="3.0" ry="2.0" fill="#d0a878"/><ellipse cx="342.3" cy="543.1" rx="3.4" ry="3.0" fill="#d0a878"/><ellipse cx="348.1" cy="542.9" rx="2.4" ry="2.9" fill="#d0a878"/><ellipse cx="353.9" cy="542.6" rx="3.0" ry="2.4" fill="#d0a878"/><ellipse cx="359.3" cy="542.4" rx="2.5" ry="2.9" fill="#d0a878"/><ellipse cx="363.8" cy="543.2" rx="3.3" ry="2.6" fill="#d0a878"/><ellipse cx="369.4" cy="542.8" rx="2.5" ry="1.9" fill="#d0a878"/><ellipse cx="374.0" cy="543.6" rx="2.8" ry="2.3" fill="#d0a878"/><ellipse cx="334.6" cy="548.4" rx="3.1" ry="2.2" fill="#d0a878"/><ellipse cx="340.3" cy="548.5" rx="3.5" ry="2.9" fill="#d0a878"/><ellipse cx="344.0" cy="548.3" rx="2.8" ry="2.3" fill="#d0a878"/><ellipse cx="350.4" cy="547.2" rx="2.7" ry="3.0" fill="#d0a878"/><ellipse cx="355.3" cy="548.8" rx="3.2" ry="2.2" fill="#d0a878"/><ellipse cx="360.6" cy="548.2" rx="3.2" ry="2.3" fill="#d0a878"/><ellipse cx="365.5" cy="547.3" rx="3.4" ry="2.7" fill="#d0a878"/><ellipse cx="370.9" cy="548.6" rx="3.1" ry="2.3" fill="#d0a878"/><ellipse cx="337.8" cy="551.8" rx="2.5" ry="2.3" fill="#d0a878"/><ellipse cx="342.8" cy="552.7" rx="3.0" ry="2.9" fill="#d0a878"/><ellipse cx="347.5" cy="553.2" rx="2.4" ry="2.8" fill="#d0a878"/><ellipse cx="352.3" cy="552.9" rx="3.4" ry="2.6" fill="#d0a878"/><ellipse cx="358.5" cy="552.7" rx="3.3" ry="2.3" fill="#d0a878"/><ellipse cx="363.1" cy="552.7" rx="3.0" ry="2.0" fill="#d0a878"/><ellipse cx="369.1" cy="552.5" rx="2.6" ry="2.7" fill="#d0a878"/><ellipse cx="374.9" cy="552.3" rx="3.4" ry="3.0" fill="#d0a878"/><ellipse cx="334.7" cy="557.0" rx="2.7" ry="2.0" fill="#d0a878"/><ellipse cx="339.2" cy="558.2" rx="2.5" ry="3.0" fill="#d0a878"/><ellipse cx="345.4" cy="557.8" rx="2.5" ry="2.6" fill="#d0a878"/><ellipse cx="349.7" cy="557.6" rx="3.3" ry="2.7" fill="#d0a878"/><ellipse cx="355.7" cy="558.0" rx="2.7" ry="2.0" fill="#d0a878"/><ellipse cx="361.7" cy="556.3" rx="2.9" ry="2.4" fill="#d0a878"/><ellipse cx="367.1" cy="557.0" rx="3.1" ry="2.5" fill="#d0a878"/><ellipse cx="371.6" cy="557.2" rx="2.9" ry="2.6" fill="#d0a878"/><ellipse cx="336.9" cy="561.7" rx="3.5" ry="3.0" fill="#d0a878"/><ellipse cx="341.8" cy="562.8" rx="2.4" ry="2.3" fill="#d0a878"/><ellipse cx="348.5" cy="561.2" rx="3.2" ry="3.0" fill="#d0a878"/><ellipse cx="353.2" cy="561.8" rx="2.4" ry="2.4" fill="#d0a878"/><ellipse cx="358.3" cy="562.4" rx="2.9" ry="2.8" fill="#d0a878"/><ellipse cx="363.5" cy="562.1" rx="3.3" ry="2.1" fill="#d0a878"/><ellipse cx="369.9" cy="561.8" rx="3.0" ry="3.0" fill="#d0a878"/><ellipse cx="374.5" cy="561.9" rx="2.6" ry="2.1" fill="#d0a878"/><ellipse cx="334.9" cy="566.5" rx="3.2" ry="2.7" fill="#d0a878"/><ellipse cx="340.0" cy="566.2" rx="3.4" ry="2.4" fill="#d0a878"/><ellipse cx="344.4" cy="567.2" rx="3.5" ry="2.0" fill="#d0a878"/><ellipse cx="351.1" cy="566.9" rx="2.7" ry="2.5" fill="#d0a878"/><ellipse cx="356.5" cy="565.8" rx="3.2" ry="2.1" fill="#d0a878"/><ellipse cx="360.3" cy="567.4" rx="3.6" ry="2.6" fill="#d0a878"/><ellipse cx="366.9" cy="566.3" rx="2.9" ry="2.6" fill="#d0a878"/><ellipse cx="372.3" cy="566.9" rx="3.0" ry="2.6" fill="#d0a878"/></g><rect x="370" y="536" width="32" height="32" fill="#1c1c62" /><rect x="403" y="536" width="32" height="32" fill="#c4a454" /><rect x="410" y="536" width="1" height="32" fill="#6a5020" /><rect x="418" y="536" width="1" height="32" fill="#6a5020" /><rect x="426" y="536" width="1" height="32" fill="#6a5020" /><rect x="434" y="536" width="1" height="32" fill="#6a5020" /><rect x="436" y="536" width="32" height="32" fill="#8a3a24" /><rect x="437.0" y="537.0" width="4" height="4" fill="#e8a040" /><rect x="443.4" y="537.0" width="4" height="4" fill="#e8a040" /><rect x="449.8" y="537.0" width="4" height="4" fill="#e8a040" /><rect x="456.2" y="537.0" width="4" height="4" fill="#e8a040" /><rect x="462.6" y="537.0" width="4" height="4" fill="#e8a040" /><rect x="440.0" y="543.4" width="4" height="4" fill="#e8a040" /><rect x="446.4" y="543.4" width="4" height="4" fill="#e8a040" /><rect x="452.8" y="543.4" width="4" height="4" fill="#e8a040" /><rect x="459.2" y="543.4" width="4" height="4" fill="#e8a040" /><rect x="465.6" y="543.4" width="4" height="4" fill="#e8a040" /><rect x="437.0" y="549.8" width="4" height="4" fill="#e8a040" /><rect x="443.4" y="549.8" width="4" height="4" fill="#e8a040" /><rect x="449.8" y="549.8" width="4" height="4" fill="#e8a040" /><rect x="456.2" y="549.8" width="4" height="4" fill="#e8a040" /><rect x="462.6" y="549.8" width="4" height="4" fill="#e8a040" /><rect x="440.0" y="556.2" width="4" height="4" fill="#e8a040" /><rect x="446.4" y="556.2" width="4" height="4" fill="#e8a040" /><rect x="452.8" y="556.2" width="4" height="4" fill="#e8a040" /><rect x="459.2" y="556.2" width="4" height="4" fill="#e8a040" /><rect x="465.6" y="556.2" width="4" height="4" fill="#e8a040" /><rect x="437.0" y="562.6" width="4" height="4" fill="#e8a040" /><rect x="443.4" y="562.6" width="4" height="4" fill="#e8a040" /><rect x="449.8" y="562.6" width="4" height="4" fill="#e8a040" /><rect x="456.2" y="562.6" width="4" height="4" fill="#e8a040" /><rect x="462.6" y="562.6" width="4" height="4" fill="#e8a040" /><rect x="469" y="536" width="32" height="32" fill="#b07838" /><rect x="480" y="551" width="3" height="3" fill="#6a4420" /><rect x="484" y="545" width="3" height="3" fill="#6a4420" /><rect x="482" y="543" width="3" height="3" fill="#6a4420" /><rect x="483" y="536" width="3" height="3" fill="#6a4420" /><rect x="482" y="563" width="3" height="3" fill="#6a4420" /><rect x="490" y="558" width="3" height="3" fill="#6a4420" /><rect x="477" y="543" width="3" height="3" fill="#6a4420" /><rect x="489" y="543" width="3" height="3" fill="#6a4420" /><rect x="469" y="545" width="3" height="3" fill="#6a4420" /><rect x="478" y="562" width="3" height="3" fill="#6a4420" /><rect x="479" y="557" width="3" height="3" fill="#6a4420" /><rect x="473" y="559" width="3" height="3" fill="#6a4420" /><rect x="488" y="545" width="3" height="3" fill="#6a4420" /><rect x="469" y="561" width="3" height="3" fill="#6a4420" /><rect x="476" y="555" width="3" height="3" fill="#6a4420" /><rect x="477" y="536" width="3" height="3" fill="#6a4420" /><rect x="497" y="540" width="3" height="3" fill="#6a4420" /><rect x="494" y="555" width="3" height="3" fill="#6a4420" /><rect x="490" y="556" width="3" height="3" fill="#6a4420" /><rect x="469" y="550" width="3" height="3" fill="#6a4420" /><rect x="483" y="555" width="3" height="3" fill="#6a4420" /><rect x="489" y="558" width="3" height="3" fill="#6a4420" /><rect x="478" y="543" width="3" height="3" fill="#6a4420" /><rect x="494" y="545" width="3" height="3" fill="#6a4420" /><rect x="480" y="544" width="3" height="3" fill="#6a4420" /><rect x="482" y="561" width="3" height="3" fill="#6a4420" /><rect x="471" y="547" width="3" height="3" fill="#6a4420" /><rect x="484" y="549" width="3" height="3" fill="#6a4420" /><rect x="502" y="536" width="32" height="32" fill="#2e3034" /><clipPath id="b502_536"><rect x="502" y="536" width="32" height="32"/></clipPath><g clip-path="url(#b502_536)"><ellipse cx="502.0" cy="532.7" rx="6.5" ry="4.7" fill="#949ca4"/><ellipse cx="513.2" cy="532.5" rx="6.2" ry="4.4" fill="#949ca4"/><ellipse cx="522.4" cy="531.8" rx="6.3" ry="4.6" fill="#949ca4"/><ellipse cx="534.0" cy="531.7" rx="6.4" ry="5.4" fill="#949ca4"/><ellipse cx="544.5" cy="533.1" rx="5.4" ry="5.3" fill="#949ca4"/><ellipse cx="497.4" cy="540.6" rx="6.2" ry="5.0" fill="#949ca4"/><ellipse cx="508.2" cy="540.8" rx="6.0" ry="5.4" fill="#949ca4"/><ellipse cx="518.3" cy="541.0" rx="5.5" ry="5.4" fill="#949ca4"/><ellipse cx="528.6" cy="542.3" rx="5.5" ry="5.3" fill="#949ca4"/><ellipse cx="540.0" cy="542.2" rx="5.4" ry="4.8" fill="#949ca4"/><ellipse cx="501.1" cy="551.1" rx="5.8" ry="5.5" fill="#949ca4"/><ellipse cx="512.4" cy="551.2" rx="6.4" ry="4.6" fill="#949ca4"/><ellipse cx="523.4" cy="551.5" rx="6.0" ry="4.7" fill="#949ca4"/><ellipse cx="533.5" cy="551.2" rx="5.6" ry="5.0" fill="#949ca4"/><ellipse cx="544.8" cy="550.7" rx="5.5" ry="5.1" fill="#949ca4"/><ellipse cx="497.5" cy="559.5" rx="5.8" ry="5.4" fill="#949ca4"/><ellipse cx="507.5" cy="559.4" rx="5.4" ry="5.2" fill="#949ca4"/><ellipse cx="517.7" cy="559.8" rx="5.7" ry="5.1" fill="#949ca4"/><ellipse cx="529.1" cy="559.5" rx="5.5" ry="5.5" fill="#949ca4"/><ellipse cx="540.2" cy="558.9" rx="6.1" ry="5.1" fill="#949ca4"/><ellipse cx="501.8" cy="569.6" rx="6.5" ry="5.0" fill="#949ca4"/><ellipse cx="512.4" cy="568.6" rx="5.7" ry="4.5" fill="#949ca4"/><ellipse cx="522.6" cy="568.6" rx="6.4" ry="5.0" fill="#949ca4"/><ellipse cx="534.6" cy="570.0" rx="6.3" ry="4.4" fill="#949ca4"/><ellipse cx="545.5" cy="568.4" rx="6.3" ry="5.3" fill="#949ca4"/></g><linearGradient id="g7_569" x1="0" y1="0" x2="0" y2="1"><stop offset="0" stop-color="#5a5448"/><stop offset=".55" stop-color="#4a4438"/><stop offset="1" stop-color="#141410"/></linearGradient><rect x="7" y="569" width="32" height="32" fill="url(#g7_569)" /><rect x="7" y="584" width="32" height="1" fill="#2a2820" /><rect x="22" y="569" width="1" height="15" fill="#2a2820" /><rect x="15" y="585" width="1" height="16" fill="#2a2820" /><rect x="31" y="585" width="1" height="16" fill="#2a2820" /><linearGradient id="g40_569" x1="0" y1="0" x2="0" y2="1"><stop offset="0" stop-color="#7a4a34"/><stop offset=".55" stop-color="#5a3828"/><stop offset="1" stop-color="#1a100a"/></linearGradient><rect x="40" y="569" width="32" height="32" fill="url(#g40_569)" /><rect x="40" y="584" width="32" height="1" fill="#3a2418" /><rect x="55" y="569" width="1" height="15" fill="#3a2418" /><rect x="48" y="585" width="1" height="16" fill="#3a2418" /><rect x="64" y="585" width="1" height="16" fill="#3a2418" /><linearGradient id="g73_569" x1="0" y1="0" x2="0" y2="1"><stop offset="0" stop-color="#8a6434"/><stop offset=".55" stop-color="#6a4a28"/><stop offset="1" stop-color="#1c140a"/></linearGradient><rect x="73" y="569" width="32" height="32" fill="url(#g73_569)" /><rect x="73" y="584" width="32" height="1" fill="#3a2a14" /><rect x="88" y="569" width="1" height="15" fill="#3a2a14" /><rect x="81" y="585" width="1" height="16" fill="#3a2a14" /><rect x="97" y="585" width="1" height="16" fill="#3a2a14" /><linearGradient id="g106_569" x1="0" y1="0" x2="0" y2="1"><stop offset="0" stop-color="#8a7444"/><stop offset=".55" stop-color="#6a5a34"/><stop offset="1" stop-color="#1c180c"/></linearGradient><rect x="106" y="569" width="32" height="32" fill="url(#g106_569)" /><rect x="106" y="584" width="32" height="1" fill="#3a3018" /><rect x="121" y="569" width="1" height="15" fill="#3a3018" /><rect x="114" y="585" width="1" height="16" fill="#3a3018" /><rect x="130" y="585" width="1" height="16" fill="#3a3018" /><linearGradient id="g139_569" x1="0" y1="0" x2="0" y2="1"><stop offset="0" stop-color="#6a6a54"/><stop offset=".55" stop-color="#5a5a44"/><stop offset="1" stop-color="#161610"/></linearGradient><rect x="139" y="569" width="32" height="32" fill="url(#g139_569)" /><rect x="139" y="584" width="32" height="1" fill="#2a2a20" /><rect x="154" y="569" width="1" height="15" fill="#2a2a20" /><rect x="147" y="585" width="1" height="16" fill="#2a2a20" /><rect x="163" y="585" width="1" height="16" fill="#2a2a20" /><rect x="172" y="569" width="32" height="32" fill="#2c2c34" /><rect x="172" y="570" width="32" height="5" fill="#686870" /><rect x="180" y="570" width="1" height="8" fill="#2c2c34" /><rect x="172" y="578" width="32" height="5" fill="#686870" /><rect x="188" y="578" width="1" height="8" fill="#2c2c34" /><rect x="172" y="586" width="32" height="5" fill="#686870" /><rect x="180" y="586" width="1" height="8" fill="#2c2c34" /><rect x="172" y="594" width="32" height="5" fill="#686870" /><rect x="188" y="594" width="1" height="8" fill="#2c2c34" /><linearGradient id="hg" x1="0" y1="0" x2="0" y2="1"><stop offset="0" stop-color="#5aa03a"/><stop offset=".6" stop-color="#3a7a28"/><stop offset="1" stop-color="#0c1a0c"/></linearGradient><rect x="205" y="569" width="32" height="32" fill="url(#hg)" /><linearGradient id="bg3" x1="0" y1="0" x2="0" y2="1"><stop offset="0" stop-color="#2a7ad0"/><stop offset=".2" stop-color="#5a78a0"/><stop offset="1" stop-color="#1a2030"/></linearGradient><rect x="238" y="569" width="32" height="32" fill="url(#bg3)" /><rect x="271" y="569" width="32" height="32" fill="#7cb03c" /><rect x="271" y="575" width="32" height="3" fill="#a88440" /><rect x="271" y="583" width="32" height="3" fill="#a88440" /><rect x="271" y="591" width="32" height="3" fill="#a88440" /><rect x="271" y="599" width="32" height="3" fill="#a88440" /><rect x="304" y="569" width="32" height="32" fill="#7cb03c" /><rect x="304" y="575" width="32" height="3" fill="#a88440" /><rect x="304" y="583" width="32" height="3" fill="#a88440" /><rect x="304" y="591" width="32" height="3" fill="#a88440" /><rect x="304" y="599" width="32" height="3" fill="#a88440" /><rect x="337" y="569" width="32" height="32" fill="#7cb03c" /><rect x="337" y="575" width="32" height="3" fill="#a88440" /><rect x="337" y="583" width="32" height="3" fill="#a88440" /><rect x="337" y="591" width="32" height="3" fill="#a88440" /><rect x="337" y="599" width="32" height="3" fill="#a88440" /><rect x="370" y="569" width="32" height="32" fill="#7cb03c" /><rect x="370" y="575" width="32" height="3" fill="#a88440" /><rect x="370" y="583" width="32" height="3" fill="#a88440" /><rect x="370" y="591" width="32" height="3" fill="#a88440" /><rect x="370" y="599" width="32" height="3" fill="#a88440" /><rect x="403" y="569" width="32" height="32" fill="#505050" /><rect x="403" y="570" width="32" height="5" fill="#c8c8c8" /><rect x="411" y="570" width="1" height="8" fill="#505050" /><rect x="403" y="578" width="32" height="5" fill="#c8c8c8" /><rect x="419" y="578" width="1" height="8" fill="#505050" /><rect x="403" y="586" width="32" height="5" fill="#c8c8c8" /><rect x="411" y="586" width="1" height="8" fill="#505050" /><rect x="403" y="594" width="32" height="5" fill="#c8c8c8" /><rect x="419" y="594" width="1" height="8" fill="#505050" /><rect x="436" y="569" width="32" height="32" fill="#505050" /><rect x="436" y="570" width="32" height="5" fill="#c8c8c8" /><rect x="444" y="570" width="1" height="8" fill="#505050" /><rect x="436" y="578" width="32" height="5" fill="#c8c8c8" /><rect x="452" y="578" width="1" height="8" fill="#505050" /><rect x="436" y="586" width="32" height="5" fill="#c8c8c8" /><rect x="444" y="586" width="1" height="8" fill="#505050" /><rect x="436" y="594" width="32" height="5" fill="#c8c8c8" /><rect x="452" y="594" width="1" height="8" fill="#505050" /><rect x="469" y="569" width="32" height="32" fill="#505050" /><rect x="469" y="570" width="32" height="5" fill="#c8c8c8" /><rect x="477" y="570" width="1" height="8" fill="#505050" /><rect x="469" y="578" width="32" height="5" fill="#c8c8c8" /><rect x="485" y="578" width="1" height="8" fill="#505050" /><rect x="469" y="586" width="32" height="5" fill="#c8c8c8" /><rect x="477" y="586" width="1" height="8" fill="#505050" /><rect x="469" y="594" width="32" height="5" fill="#c8c8c8" /><rect x="485" y="594" width="1" height="8" fill="#505050" /><rect x="502" y="569" width="32" height="32" fill="#505050" /><rect x="502" y="570" width="32" height="5" fill="#c8c8c8" /><rect x="510" y="570" width="1" height="8" fill="#505050" /><rect x="502" y="578" width="32" height="5" fill="#c8c8c8" /><rect x="518" y="578" width="1" height="8" fill="#505050" /><rect x="502" y="586" width="32" height="5" fill="#c8c8c8" /><rect x="510" y="586" width="1" height="8" fill="#505050" /><rect x="502" y="594" width="32" height="5" fill="#c8c8c8" /><rect x="518" y="594" width="1" height="8" fill="#505050" /></g></svg>
<svg class="a" style="left:0;top:0" width="909" height="632" viewBox="0 0 909 632">
<defs>
<linearGradient id="tabI" x1="0" y1="0" x2="0" y2="1"><stop offset="0" stop-color="#f2f2f2"/><stop offset="1" stop-color="#d2d2d6"/></linearGradient>
<linearGradient id="tabA" x1="0" y1="0" x2="0" y2="1"><stop offset="0" stop-color="#fbfbfb"/><stop offset="1" stop-color="#e2e2e6"/></linearGradient>
<linearGradient id="tabH" x1="0" y1="0" x2="0" y2="1"><stop offset="0" stop-color="#c6c7cc"/><stop offset="1" stop-color="#f0f0f0"/></linearGradient>
<linearGradient id="btnG" x1="0" y1="0" x2="0" y2="1"><stop offset="0" stop-color="#fafafa"/><stop offset="1" stop-color="#dcdde2"/></linearGradient>
<linearGradient id="hdl" x1="0" y1="0" x2="1" y2="0"><stop offset="0" stop-color="#fbfbfb"/><stop offset="1" stop-color="#d4d7de"/></linearGradient>
<g id="xic"><path d="M1 1 L8.5 8.5 M8.5 1 L1 8.5" stroke="#7c7c7c" stroke-width="2.5" stroke-linecap="round"/><path d="M1 1 L8.5 8.5 M8.5 1 L1 8.5" stroke="#c8c8c8" stroke-width="0.9" stroke-linecap="round"/></g>
<g id="floatb"><rect x=".5" y=".5" width="10" height="10" rx="2" fill="#f4f4f4" stroke="#6e6e6e"/><rect x="4" y="2.5" width="4.5" height="4.5" rx=".8" fill="none" stroke="#555" stroke-width="1"/><rect x="2.5" y="4" width="4.5" height="4.5" rx=".8" fill="#f4f4f4" stroke="#555" stroke-width="1"/></g>
<g id="closeb"><rect x=".5" y=".5" width="10" height="10" rx="2" fill="#f4f4f4" stroke="#6e6e6e"/><path d="M3 3 L8 8 M8 3 L3 8" stroke="#4a4a4a" stroke-width="1.8"/></g>
<g id="chk"><rect x=".5" y=".5" width="12" height="12" fill="#fff" stroke="#8a8a8a"/><path d="M2.4 6.2 L5.1 9.9 L10.6 2.4" fill="none" stroke="#000" stroke-width="2.4" stroke-linejoin="miter"/></g>
</defs>
<use href="#floatb" x="870" y="72"/><use href="#closeb" x="886" y="72"/>
<use href="#floatb" x="870" y="423"/><use href="#closeb" x="886" y="423"/>
<use href="#chk" x="632" y="118"/>
<use href="#chk" x="632" y="133"/>
<use href="#chk" x="632" y="148"/>
<use href="#chk" x="632" y="163"/>
<use href="#chk" x="632" y="178"/>
<use href="#chk" x="632" y="193"/>
<use href="#chk" x="632" y="208"/>
<g fill="#9aa0a8"><rect x="880" y="98" width="1" height="1"/><rect x="880" y="101" width="1" height="1"/><rect x="880" y="104" width="1" height="1"/><rect x="883" y="98" width="1" height="1"/><rect x="883" y="101" width="1" height="1"/><rect x="883" y="104" width="1" height="1"/><rect x="886" y="98" width="1" height="1"/><rect x="886" y="101" width="1" height="1"/><rect x="886" y="104" width="1" height="1"/></g>
<rect x="877" y="96" width="1" height="11" fill="#b8b8b8"/><rect x="886" y="96" width="1" height="11" fill="#b8b8b8"/>
<g fill="#a0a0a0"><rect x="432" y="412" width="1" height="4"/><rect x="434" y="412" width="1" height="4"/><rect x="436" y="412" width="1" height="4"/><rect x="438" y="412" width="1" height="4"/><rect x="440" y="412" width="1" height="4"/><rect x="442" y="412" width="1" height="4"/><rect x="444" y="412" width="1" height="4"/><rect x="446" y="412" width="1" height="4"/><rect x="448" y="412" width="1" height="4"/><rect x="450" y="412" width="1" height="4"/><rect x="452" y="412" width="1" height="4"/><rect x="454" y="412" width="1" height="4"/><rect x="456" y="412" width="1" height="4"/><rect x="458" y="412" width="1" height="4"/><rect x="460" y="412" width="1" height="4"/><rect x="462" y="412" width="1" height="4"/><rect x="464" y="412" width="1" height="4"/><rect x="466" y="412" width="1" height="4"/><rect x="468" y="412" width="1" height="4"/><rect x="470" y="412" width="1" height="4"/></g>
<g fill="#a0a0a0"><rect x="617" y="218" width="4" height="1"/><rect x="617" y="220" width="4" height="1"/><rect x="617" y="222" width="4" height="1"/><rect x="617" y="224" width="4" height="1"/><rect x="617" y="226" width="4" height="1"/><rect x="617" y="228" width="4" height="1"/><rect x="617" y="230" width="4" height="1"/><rect x="617" y="232" width="4" height="1"/><rect x="617" y="234" width="4" height="1"/><rect x="617" y="236" width="4" height="1"/><rect x="617" y="238" width="4" height="1"/><rect x="617" y="240" width="4" height="1"/><rect x="617" y="242" width="4" height="1"/><rect x="617" y="244" width="4" height="1"/><rect x="617" y="246" width="4" height="1"/><rect x="617" y="248" width="4" height="1"/><rect x="617" y="250" width="4" height="1"/><rect x="617" y="252" width="4" height="1"/><rect x="617" y="254" width="4" height="1"/><rect x="617" y="256" width="4" height="1"/></g>
<path d="M633.5 368.5 L640.5 361 L647.5 368.5" fill="none" stroke="#8a8a8a" stroke-width="3" stroke-linejoin="round"/><path d="M633.5 368.5 L640.5 361 L647.5 368.5" fill="none" stroke="#fdfdfd" stroke-width="1.2"/>
<circle cx="640.5" cy="369.5" r="1.5" fill="#fff" stroke="#8a8a8a"/><circle cx="640.5" cy="373.5" r="1.5" fill="#fff" stroke="#8a8a8a"/>
<path d="M662.5 365.5 L669.5 373 L676.5 365.5" fill="none" stroke="#a4a4a4" stroke-width="3" stroke-linejoin="round"/><path d="M662.5 365.5 L669.5 373 L676.5 365.5" fill="none" stroke="#fdfdfd" stroke-width="1.2"/>
<circle cx="669.5" cy="361" r="1.5" fill="#fff" stroke="#a4a4a4"/><circle cx="669.5" cy="365" r="1.5" fill="#fff" stroke="#a4a4a4"/>
<rect x="696.5" y="365.5" width="10" height="10" rx="1" fill="#5a6478" stroke="#f4f4f4" stroke-width="1"/><rect x="696" y="365" width="11" height="11" rx="1.5" fill="none" stroke="#3a3a40" stroke-width=".9"/>
<rect x="691.5" y="360.5" width="11" height="11" rx="1" fill="#3a4a6a" stroke="#f4f4f4" stroke-width="1.4"/><rect x="690.8" y="359.8" width="12.4" height="12.4" rx="1.5" fill="none" stroke="#2a2a30" stroke-width=".9"/><rect x="693" y="366" width="8" height="2" fill="#8a9ab8"/>
<circle cx="728" cy="368" r="6.8" fill="#f4f4f4" stroke="#d81818" stroke-width="2.6"/><path d="M725.5 365.5 L730.5 370.5 M730.5 365.5 L725.5 370.5" stroke="#3a3a3a" stroke-width="2"/>
<path d="M622.5 408.5 V391.5 Q622.5 389.5 624.5 389.5 H678.5 V408.5 Z" fill="url(#tabH)" stroke="#9a9a9e"/>
<path d="M678.5 388.5 H731.5 Q733.5 388.5 733.5 390.5 V408.5 Q733.5 410.5 731.5 410.5 H680.5 Q678.5 410.5 678.5 408.5 Z" fill="url(#tabA)" stroke="#a4a4a8"/>
<rect x="733" y="388" width="166" height="1" fill="#a4a4a8"/>
<path d="M679 408 H733 V409 Q733 411 731 411 H681 Q679 411 679 409 Z" fill="#00006e"/>
<rect x="5" y="466.5" width="894" height="1" fill="#a8a8a8"/>
<path d="M94.5 466.5 V444.5 Q94.5 442.5 96.5 442.5 H185.5 V466.5" fill="url(#tabI)" stroke="#9a9a9e"/>
<path d="M185.5 466.5 V444.5 Q185.5 442.5 187.5 442.5 H276.5 V466.5" fill="url(#tabI)" stroke="#9a9a9e"/>
<path d="M276.5 466.5 V444.5 Q276.5 442.5 278.5 442.5 H367.0 V466.5" fill="url(#tabI)" stroke="#9a9a9e"/>
<path d="M367.0 466.5 V444.5 Q367.0 442.5 369.0 442.5 H457.5 V466.5" fill="url(#tabI)" stroke="#9a9a9e"/>
<path d="M457.5 466.5 V444.5 Q457.5 442.5 459.5 442.5 H548.5 V466.5" fill="url(#tabI)" stroke="#9a9a9e"/>
<path d="M548.5 466.5 V444.5 Q548.5 442.5 550.5 442.5 H639.5 V466.5" fill="url(#tabI)" stroke="#9a9a9e"/>
<path d="M639.5 466.5 V444.5 Q639.5 442.5 641.5 442.5 H730.5 V466.5" fill="url(#tabI)" stroke="#9a9a9e"/>
<path d="M730.5 466.5 V444.5 Q730.5 442.5 732.5 442.5 H821.5 V466.5" fill="url(#tabI)" stroke="#9a9a9e"/>
<path d="M821.5 466.5 V444.5 Q821.5 442.5 823.5 442.5 H869.5 V466.5" fill="url(#tabI)" stroke="#9a9a9e"/>
<path d="M5.5 467 V443.5 Q5.5 440.5 8.5 440.5 H91.5 Q94.5 440.5 94.5 443.5 V467" fill="url(#tabA)" stroke="#a4a4a8"/>
<path d="M5.5 444 V443 Q5.5 440 8.5 440 H91.5 Q94.5 440 94.5 443 V443.6 H5.5 Z" fill="#00006c"/>
<path d="M6 443 Q6 441 8.5 441 H91.5 Q94 441 94 443 Z" fill="#00006c"/>
<rect x="6" y="466" width="88" height="2" fill="#f0f0f2"/>
<use href="#xic" x="68" y="449.5"/>
<use href="#xic" x="158.5" y="449.5"/>
<use href="#xic" x="249.5" y="449.5"/>
<use href="#xic" x="340.5" y="449.5"/>
<use href="#xic" x="431.0" y="449.5"/>
<use href="#xic" x="521.5" y="449.5"/>
<use href="#xic" x="612.5" y="449.5"/>
<use href="#xic" x="703.5" y="449.5"/>
<use href="#xic" x="794.5" y="449.5"/>
<rect x="869.5" y="442.5" width="14" height="24" rx="2" fill="url(#btnG)" stroke="#b4b4b8"/><polygon points="873.5,454.5 879.5,449.5 879.5,459.5" fill="#a8a8a8"/>
<rect x="884.5" y="442.5" width="14" height="24" rx="2" fill="url(#btnG)" stroke="#9a9a9e"/><polygon points="894,454.5 888,449.5 888,459.5" fill="#000"/>
<rect x="883.5" y="470.5" width="14" height="128" rx="2.5" fill="#b8bdc9" stroke="#8c9098"/>
<rect x="883.5" y="470.5" width="14" height="15" rx="2.5" fill="url(#btnG)" stroke="#8c9098"/><polygon points="890.5,475.5 886.5,480 894.5,480" fill="#000"/>
<rect x="883.5" y="485.5" width="14" height="48" fill="url(#hdl)" stroke="#8c9098"/>
<g fill="#9aa0aa"><rect x="887" y="506" width="7" height="1"/><rect x="887" y="508.5" width="7" height="1"/><rect x="887" y="511" width="7" height="1"/></g>
<rect x="883.5" y="583.5" width="14" height="15" rx="2.5" fill="url(#btnG)" stroke="#8c9098"/><polygon points="890.5,593 886.5,588.5 894.5,588.5" fill="#000"/>
<g stroke="#b8b8b8" stroke-width="1"><line x1="896" y1="622" x2="899" y2="619"/><line x1="893" y1="622" x2="899" y2="616"/><line x1="890" y1="622" x2="899" y2="613"/><line x1="887" y1="622" x2="899" y2="610"/><line x1="884" y1="622" x2="899" y2="607"/></g>
</svg>
<div class="a" style="left:5px;top:440px;width:864px;height:27px;overflow:hidden"><div class="a" style="left:-5px;top:-440px;width:909px;height:632px">
<div class="t" style="left:17px;top:449px">tiles_1_1</div>
<div class="t" style="left:107.5px;top:449px">tiles_1_2</div>
<div class="t" style="left:198.5px;top:449px">tiles_2_1</div>
<div class="t" style="left:289.5px;top:449px">tiles_2_2</div>
<div class="t" style="left:380.0px;top:449px">tiles_2_3</div>
<div class="t" style="left:470.5px;top:449px">tiles_2_4</div>
<div class="t" style="left:561.5px;top:449px">tiles_2_5</div>
<div class="t" style="left:652.5px;top:449px">tiles_1_3</div>
<div class="t" style="left:743.5px;top:449px">tiles_1_4</div>
<div class="t" style="left:834.5px;top:449px">tiles_1_5</div>
</div></div>
<div class="t" style="left:848px;top:607px">100%</div>
<div class="t" style="left:634px;top:393px">History</div>
<div class="t" style="left:690px;top:394px">Layers</div>
<svg class="a" style="left:0;top:0" width="909" height="632" viewBox="0 0 909 632">
<defs><filter id="cb" x="-10%" y="-10%" width="120%" height="120%"><feGaussianBlur stdDeviation="0.6"/></filter></defs>
<g filter="url(#cb)">
<ellipse cx="272" cy="52" rx="35.8" ry="31.6" transform="rotate(-7 272 52)" fill="none" stroke="#ff0c0c" stroke-opacity=".74" stroke-width="5.8"/>
<ellipse cx="386.3" cy="552.7" rx="30.8" ry="30.8" fill="none" stroke="#ff0c0c" stroke-opacity=".8" stroke-width="5.6"/>
</g>
</svg>

</body></html>
